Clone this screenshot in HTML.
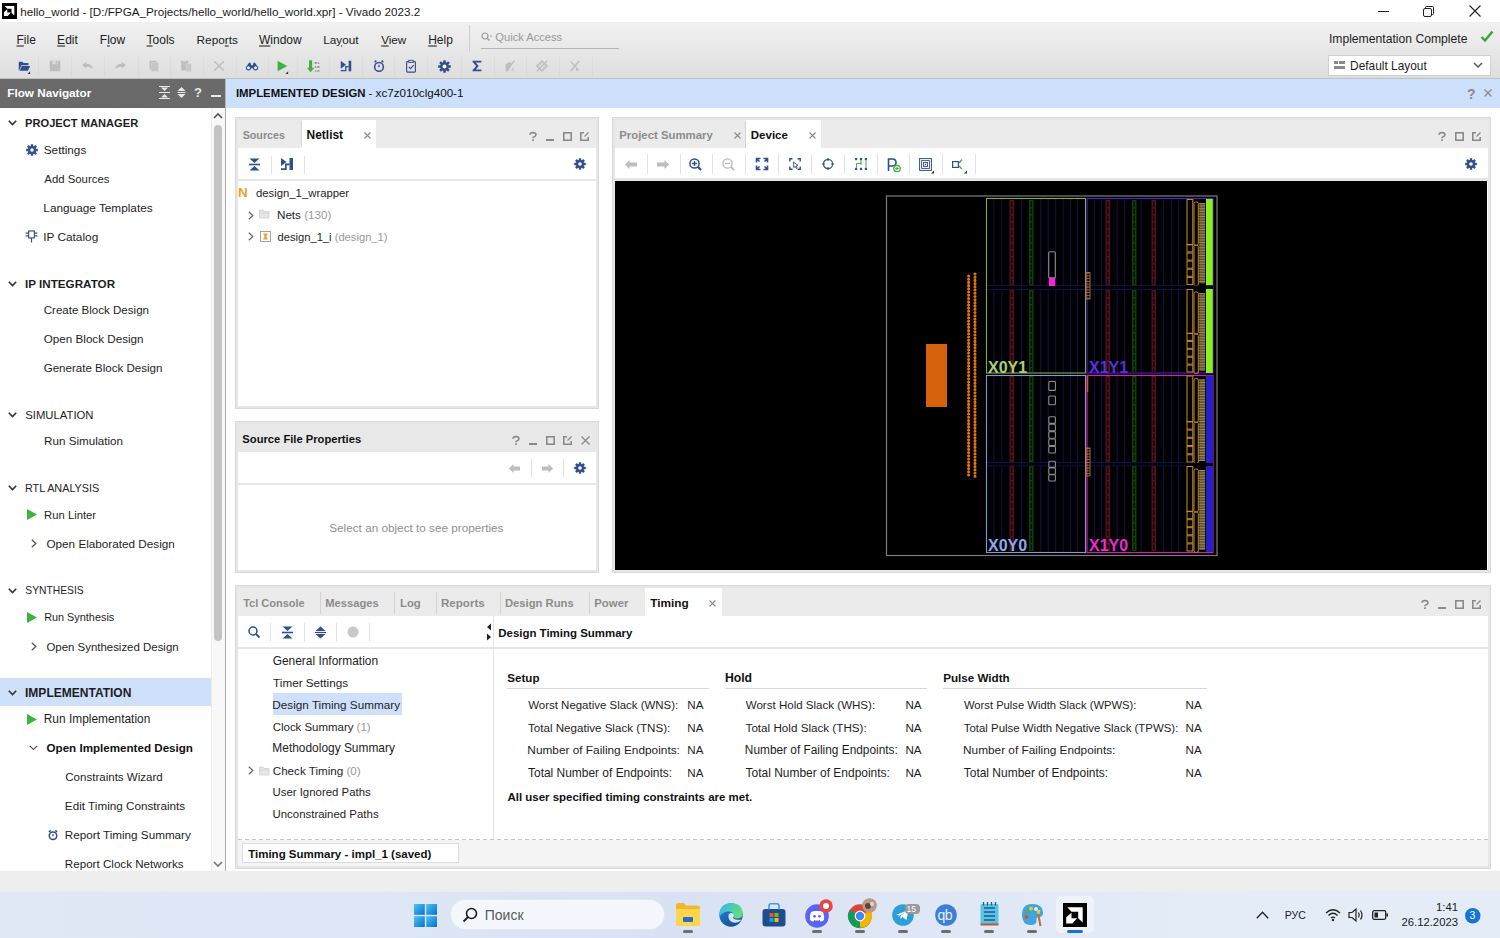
<!DOCTYPE html><html><head><meta charset="utf-8"><style>
html,body{margin:0;padding:0;}
body{width:1500px;height:938px;overflow:hidden;position:relative;background:#fff;font-family:"Liberation Sans",sans-serif;}
.t{position:absolute;white-space:nowrap;}
svg{overflow:visible}
</style></head><body>

<div style="position:absolute;left:0px;top:0px;width:1500px;height:22px;background:#fff"></div>
<svg style="position:absolute;left:2px;top:3px;" width="15" height="16" viewBox="0 0 15 16"><rect width="15" height="16" fill="#000"/><path d="M2.7 3 H12.3 V12.5 L9.5 9.8 V5.8 H5.3 Z" fill="#fff"/><path d="M2 13 V9 L5.3 6.2 V9.6 H8.8 L5.8 13 Z" fill="#fff"/></svg>
<div class="t" style="left:20.18px;top:3.5px;font-size:11.68px;font-weight:400;color:#1a1a1a;line-height:16px;">hello_world - [D:/FPGA_Projects/hello_world/hello_world.xpr] - Vivado 2023.2</div>
<div style="position:absolute;left:1378px;top:11px;width:11px;height:1px;background:#222"></div>
<svg style="position:absolute;left:1423px;top:6px;" width="11" height="11" viewBox="0 0 11 11"><rect x="0.5" y="2.5" width="8" height="8" rx="1.5" fill="none" stroke="#222"/><path d="M2.5 2.5 V1.5 Q2.5 0.5 3.5 0.5 H9.5 Q10.5 0.5 10.5 1.5 V7.5 Q10.5 8.5 9.5 8.5 H8.5" fill="none" stroke="#222"/></svg>
<svg style="position:absolute;left:1469px;top:5px;" width="12" height="12" viewBox="0 0 12 12"><path d="M0.5 0.5 L11.5 11.5 M11.5 0.5 L0.5 11.5" stroke="#222" stroke-width="1.1"/></svg>
<div style="position:absolute;left:0px;top:22px;width:1500px;height:56px;background:linear-gradient(#f1f1f1,#dedede)"></div>
<div class="t" style="left:16.51px;top:32.0px;font-size:12px;font-weight:400;color:#222;line-height:16px;"><u style="text-decoration-thickness:1.5px;text-underline-offset:1px;text-decoration-color:#808080">F</u>ile</div>
<div class="t" style="left:57.12px;top:32.0px;font-size:12px;font-weight:400;color:#222;line-height:16px;"><u style="text-decoration-thickness:1.5px;text-underline-offset:1px;text-decoration-color:#808080">E</u>dit</div>
<div class="t" style="left:99.84px;top:32.0px;font-size:11.94px;font-weight:400;color:#222;line-height:16px;">F<u style="text-decoration-thickness:1.5px;text-underline-offset:1px;text-decoration-color:#808080">l</u>ow</div>
<div class="t" style="left:146.55px;top:32.0px;font-size:12px;font-weight:400;color:#222;line-height:16px;"><u style="text-decoration-thickness:1.5px;text-underline-offset:1px;text-decoration-color:#808080">T</u>ools</div>
<div class="t" style="left:196.55px;top:32.0px;font-size:11.82px;font-weight:400;color:#222;line-height:16px;">Repo<u style="text-decoration-thickness:1.5px;text-underline-offset:1px;text-decoration-color:#808080">r</u>ts</div>
<div class="t" style="left:259.04px;top:32.0px;font-size:12px;font-weight:400;color:#222;line-height:16px;"><u style="text-decoration-thickness:1.5px;text-underline-offset:1px;text-decoration-color:#808080">W</u>indow</div>
<div class="t" style="left:323.16px;top:32.0px;font-size:11.77px;font-weight:400;color:#222;line-height:16px;">La<u style="text-decoration-thickness:1.5px;text-underline-offset:1px;text-decoration-color:#808080">y</u>out</div>
<div class="t" style="left:381.14px;top:32.0px;font-size:11.66px;font-weight:400;color:#222;line-height:16px;"><u style="text-decoration-thickness:1.5px;text-underline-offset:1px;text-decoration-color:#808080">V</u>iew</div>
<div class="t" style="left:428.18px;top:32.0px;font-size:12px;font-weight:400;color:#222;line-height:16px;"><u style="text-decoration-thickness:1.5px;text-underline-offset:1px;text-decoration-color:#808080">H</u>elp</div>
<div style="position:absolute;left:469px;top:25px;width:1px;height:27px;background:#cfcfcf"></div>
<svg style="position:absolute;left:481px;top:32px;" width="12" height="10" viewBox="0 0 12 10"><circle cx="4" cy="4" r="3" fill="none" stroke="#9a9a9a" stroke-width="1.2"/><path d="M6 6 L8.5 8.5" stroke="#9a9a9a" stroke-width="1.4"/><path d="M9 4 h2" stroke="#9a9a9a"/></svg>
<div class="t" style="left:495.3px;top:29.0px;font-size:11.15px;font-weight:400;color:#9a9a9a;line-height:16px;">Quick Access</div>
<div style="position:absolute;left:481px;top:48px;width:138px;height:1px;background:#b5b5b5"></div>
<div class="t" style="left:1328.9px;top:31.0px;font-size:12.17px;font-weight:400;color:#1e1e1e;line-height:16px;">Implementation Complete</div>
<svg style="position:absolute;left:1480px;top:30px;" width="14" height="13" viewBox="0 0 14 13"><path d="M1.5 7 L5 10.5 L12.5 1.5" fill="none" stroke="#3aa33a" stroke-width="2.4"/></svg>
<div style="position:absolute;left:1328px;top:55px;width:163px;height:21px;background:#fff;border:1px solid #d0d0d0;box-sizing:border-box"></div>
<svg style="position:absolute;left:1334px;top:61px;" width="11" height="9" viewBox="0 0 11 9"><rect x="0" y="0" width="4" height="3" fill="#8a8a8a"/><rect x="5" y="0" width="6" height="3" fill="#8a8a8a"/><rect x="0" y="5" width="11" height="3" fill="#8a8a8a"/></svg>
<div class="t" style="left:1350.05px;top:57.5px;font-size:11.9px;font-weight:400;color:#1e1e1e;line-height:16px;">Default Layout</div>
<svg style="position:absolute;left:1473px;top:62px;" width="10" height="7" viewBox="0 0 10 7"><path d="M1 1 L5 5 L9 1" fill="none" stroke="#555" stroke-width="1.5"/></svg>
<svg style="position:absolute;left:17.0px;top:59.0px;" width="14" height="14" viewBox="0 0 16 16"><path d="M2 3 h4 l1.5 1.5 H13 V7 H5 L2.5 13 H2 Z" fill="#2f4f8f"/><path d="M5.5 8 H15 L12.5 13.5 H3 Z" fill="#2f4f8f"/><path d="M15 14 V17 H12 Z" fill="#333"/></svg>
<svg style="position:absolute;left:48.0px;top:59.0px;" width="14" height="14" viewBox="0 0 16 16"><path d="M2 2 H14 V14 H2 Z" fill="#bdbdbd"/><rect x="5" y="2" width="6" height="4" fill="#d9d9d9"/><rect x="9" y="2.5" width="1.3" height="2.5" fill="#bdbdbd"/></svg>
<svg style="position:absolute;left:81.0px;top:59.0px;" width="14" height="14" viewBox="0 0 16 16"><path d="M1.5 7 L6 3 V5.5 Q12 5.5 14 11.5 Q11 8.5 6 8.5 V11 Z" fill="#bdbdbd"/></svg>
<svg style="position:absolute;left:113.0px;top:59.0px;" width="14" height="14" viewBox="0 0 16 16"><path d="M14.5 7 L10 3 V5.5 Q4 5.5 2 11.5 Q5 8.5 10 8.5 V11 Z" fill="#bdbdbd"/></svg>
<svg style="position:absolute;left:146.7px;top:59.0px;" width="14" height="14" viewBox="0 0 16 16"><rect x="3" y="2" width="8" height="10" fill="#bdbdbd"/><rect x="5" y="4" width="8" height="10" fill="#c6c6c6" stroke="#d5d5d5" stroke-width="0.6"/></svg>
<svg style="position:absolute;left:179.0px;top:59.0px;" width="14" height="14" viewBox="0 0 16 16"><rect x="2.5" y="2" width="8" height="11" fill="#bdbdbd"/><rect x="4.5" y="1.5" width="4" height="1.6" fill="#dedede"/><rect x="8" y="5.5" width="6" height="9" fill="#c9c9c9" stroke="#dcdcdc" stroke-width="0.6"/></svg>
<svg style="position:absolute;left:212.0px;top:59.0px;" width="14" height="14" viewBox="0 0 16 16"><path d="M2.5 2.5 L13.5 13.5 M13.5 2.5 L2.5 13.5" stroke="#bdbdbd" stroke-width="1.6"/></svg>
<svg style="position:absolute;left:245.0px;top:59.0px;" width="14" height="14" viewBox="0 0 16 16"><path d="M4 5 Q5 3.5 6.5 4.5 L7 7 H9 L9.5 4.5 Q11 3.5 12 5 L15 9.5 Q15.5 13 12 13 Q9.5 13 9 10.5 H7 Q6.5 13 4 13 Q0.5 13 1 9.5 Z" fill="#2f4f8f"/><circle cx="4" cy="10" r="1.8" fill="#e6e6e6"/><circle cx="12" cy="10" r="1.8" fill="#e6e6e6"/></svg>
<svg style="position:absolute;left:275.0px;top:59.0px;" width="14" height="14" viewBox="0 0 16 16"><path d="M3 2 L14 8 L3 14 Z" fill="#3cb43c"/><path d="M15 14 V17 H12 Z" fill="#333"/></svg>
<svg style="position:absolute;left:306.0px;top:59.0px;" width="14" height="14" viewBox="0 0 16 16"><path d="M3 1.5 H6.5 V10 H9 L4.75 15 L0.5 10 H3 Z" fill="#3cb43c" transform="translate(0.5,0)"/><text x="9.5" y="6" font-size="5" font-family="Liberation Mono" fill="#555">01</text><text x="9.5" y="10.5" font-size="5" font-family="Liberation Mono" fill="#555">10</text><text x="9.5" y="14.5" font-size="5" font-family="Liberation Mono" fill="#777">10</text></svg>
<svg style="position:absolute;left:338.6px;top:59.0px;" width="14" height="14" viewBox="0 0 16 16"><path d="M2 2 L8 6.5 L2 11 Z" fill="#2f4f8f"/><rect x="11" y="2" width="3" height="12" fill="#2f4f8f"/><path d="M7 8 H11 V9.5 H8.5 V14 H2 V12.5 H7 Z" fill="#2f4f8f"/></svg>
<svg style="position:absolute;left:371.5px;top:59.0px;" width="14" height="14" viewBox="0 0 16 16"><circle cx="8" cy="9" r="5" fill="none" stroke="#2f4f8f" stroke-width="1.8"/><path d="M3 3.5 L5 2 M13 3.5 L11 2" stroke="#2f4f8f" stroke-width="1.8"/><path d="M8 6.5 V9.5" stroke="#2f4f8f" stroke-width="1.5"/></svg>
<svg style="position:absolute;left:404.3px;top:59.0px;" width="14" height="14" viewBox="0 0 16 16"><rect x="3" y="3" width="10" height="12" rx="1" fill="none" stroke="#2f4f8f" stroke-width="1.3"/><rect x="5.5" y="1.5" width="5" height="2.5" fill="#e0e0e0" stroke="#2f4f8f" stroke-width="1"/><path d="M5.5 9 L7.5 11 L11 7" fill="none" stroke="#2f4f8f" stroke-width="1.2"/></svg>
<svg style="position:absolute;left:437.5px;top:59.5px;" width="13" height="13" viewBox="0 0 16 16"><polygon points="12.97,6.46 15.74,6.43 15.74,9.57 12.97,9.54 12.60,10.43 14.58,12.36 12.36,14.58 10.43,12.60 9.54,12.97 9.57,15.74 6.43,15.74 6.46,12.97 5.57,12.60 3.64,14.58 1.42,12.36 3.40,10.43 3.03,9.54 0.26,9.57 0.26,6.43 3.03,6.46 3.40,5.57 1.42,3.64 3.64,1.42 5.57,3.40 6.46,3.03 6.43,0.26 9.57,0.26 9.54,3.03 10.43,3.40 12.36,1.42 14.58,3.64 12.60,5.57" fill="#2f4f8f"/><circle cx="8" cy="8" r="5.2" fill="#2f4f8f"/><circle cx="8" cy="8" r="2.4" fill="#fff"/></svg>
<svg style="position:absolute;left:470.0px;top:59.0px;" width="14" height="14" viewBox="0 0 16 16"><path d="M3 2 H13 V4 H6.5 L10 8 L6.5 12 H13 V14 H3 V12.5 L7 8 L3 3.5 Z" fill="#2f4f8f"/></svg>
<svg style="position:absolute;left:502.7px;top:59.0px;" width="14" height="14" viewBox="0 0 16 16"><path d="M3 6 L8 3 L10 6 L6 14 H3 Z" fill="#bdbdbd"/><path d="M13 2 L4 13" stroke="#bdbdbd" stroke-width="1.4"/><path d="M9 14 L11 9 L13 14 Z" fill="#ccc"/></svg>
<svg style="position:absolute;left:535.3px;top:59.0px;" width="14" height="14" viewBox="0 0 16 16"><path d="M2 8 L8 2 L14 8 L8 14 Z" fill="none" stroke="#bdbdbd" stroke-width="1.4"/><path d="M4 8 L8 4 L12 8 L8 12 Z" fill="none" stroke="#bdbdbd" stroke-width="1"/><path d="M14 2 L2 14" stroke="#bdbdbd" stroke-width="1.4"/></svg>
<svg style="position:absolute;left:568.3px;top:59.0px;" width="14" height="14" viewBox="0 0 16 16"><path d="M3 3 L9 9 M13 2 L3 14" stroke="#bdbdbd" stroke-width="1.6"/><path d="M9 9 L13 12 L9 14 Z" fill="#bdbdbd"/></svg>
<div style="position:absolute;left:38px;top:56px;width:1px;height:21px;background:rgba(0,0,0,0.025)"></div>
<div style="position:absolute;left:71px;top:56px;width:1px;height:21px;background:rgba(0,0,0,0.025)"></div>
<div style="position:absolute;left:104px;top:56px;width:1px;height:21px;background:rgba(0,0,0,0.025)"></div>
<div style="position:absolute;left:138px;top:56px;width:1px;height:21px;background:rgba(0,0,0,0.025)"></div>
<div style="position:absolute;left:170px;top:56px;width:1px;height:21px;background:rgba(0,0,0,0.025)"></div>
<div style="position:absolute;left:203px;top:56px;width:1px;height:21px;background:rgba(0,0,0,0.025)"></div>
<div style="position:absolute;left:236px;top:56px;width:1px;height:21px;background:rgba(0,0,0,0.025)"></div>
<div style="position:absolute;left:268px;top:56px;width:1px;height:21px;background:rgba(0,0,0,0.025)"></div>
<div style="position:absolute;left:297px;top:56px;width:1px;height:21px;background:rgba(0,0,0,0.025)"></div>
<div style="position:absolute;left:329px;top:56px;width:1px;height:21px;background:rgba(0,0,0,0.025)"></div>
<div style="position:absolute;left:362px;top:56px;width:1px;height:21px;background:rgba(0,0,0,0.025)"></div>
<div style="position:absolute;left:394px;top:56px;width:1px;height:21px;background:rgba(0,0,0,0.025)"></div>
<div style="position:absolute;left:427px;top:56px;width:1px;height:21px;background:rgba(0,0,0,0.025)"></div>
<div style="position:absolute;left:461px;top:56px;width:1px;height:21px;background:rgba(0,0,0,0.025)"></div>
<div style="position:absolute;left:494px;top:56px;width:1px;height:21px;background:rgba(0,0,0,0.025)"></div>
<div style="position:absolute;left:526px;top:56px;width:1px;height:21px;background:rgba(0,0,0,0.025)"></div>
<div style="position:absolute;left:559px;top:56px;width:1px;height:21px;background:rgba(0,0,0,0.025)"></div>
<div style="position:absolute;left:592px;top:56px;width:1px;height:21px;background:rgba(0,0,0,0.025)"></div>
<div style="position:absolute;left:0px;top:78px;width:1500px;height:1px;background:#c2c2c2"></div>
<div style="position:absolute;left:0px;top:79px;width:225px;height:29px;background:#6a6a6a"></div>
<div style="position:absolute;left:225px;top:79px;width:1px;height:29px;background:#b5b5b5"></div>
<div class="t" style="left:7.24px;top:84.5px;font-size:11.73px;font-weight:700;color:#fff;line-height:16px;">Flow Navigator</div>
<svg style="position:absolute;left:159px;top:86px;" width="11" height="13" viewBox="0 0 11 13"><path d="M0 0.5 H11 M0 6.5 H11 M0 12.5 H11" stroke="#e8e8e8" stroke-width="1.2"/><path d="M2 1.5 L9 1.5 L5.5 5 Z M2 11.5 L9 11.5 L5.5 8 Z" fill="#e8e8e8"/></svg>
<svg style="position:absolute;left:177px;top:86px;" width="9" height="13" viewBox="0 0 9 13"><path d="M0.5 5 L4.5 1 L8.5 5 Z M0.5 8 L4.5 12 L8.5 8 Z" fill="#e8e8e8"/><path d="M0.5 6.5 H8.5" stroke="#e8e8e8" stroke-width="1"/></svg>
<div class="t" style="left:194px;top:84.5px;font-size:13px;font-weight:700;color:#e8e8e8;line-height:16px;">?</div>
<div style="position:absolute;left:211px;top:95px;width:10px;height:2px;background:#e8e8e8"></div>
<div style="position:absolute;left:0px;top:108px;width:211px;height:763px;background:#fff"></div>
<div style="position:absolute;left:211px;top:108px;width:14px;height:763px;background:#f8f8f8;box-shadow:inset 1px 0 0 #ececec"></div>
<div style="position:absolute;left:214px;top:125px;width:8px;height:516px;background:#c3c3c3;border-radius:4px"></div>
<svg style="position:absolute;left:213px;top:112px;" width="10" height="7" viewBox="0 0 10 7"><path d="M1 6 L5 2 L9 6" fill="none" stroke="#555" stroke-width="1.6"/></svg>
<svg style="position:absolute;left:213px;top:861px;" width="10" height="7" viewBox="0 0 10 7"><path d="M1 1 L5 5 L9 1" fill="none" stroke="#777" stroke-width="1.6"/></svg>
<div style="position:absolute;left:225px;top:108px;width:1px;height:763px;background:#a9a9a9"></div>
<div style="position:absolute;left:0px;top:678px;width:211px;height:28px;background:#cfe0fb"></div>
<svg style="position:absolute;left:8px;top:120px;" width="9" height="6" viewBox="0 0 9 6"><path d="M0.8 0.8 L4.5 4.5 L8.2 0.8" fill="none" stroke="#333" stroke-width="1.6"/></svg>
<div class="t" style="left:25.08px;top:115.0px;font-size:11.13px;font-weight:700;color:#1e1e1e;line-height:16px;">PROJECT MANAGER</div>
<svg style="position:absolute;left:8px;top:280.5px;" width="9" height="6" viewBox="0 0 9 6"><path d="M0.8 0.8 L4.5 4.5 L8.2 0.8" fill="none" stroke="#333" stroke-width="1.6"/></svg>
<div class="t" style="left:25.04px;top:275.5px;font-size:11.67px;font-weight:700;color:#1e1e1e;line-height:16px;">IP INTEGRATOR</div>
<svg style="position:absolute;left:8px;top:411.5px;" width="9" height="6" viewBox="0 0 9 6"><path d="M0.8 0.8 L4.5 4.5 L8.2 0.8" fill="none" stroke="#333" stroke-width="1.6"/></svg>
<div class="t" style="left:25.29px;top:406.5px;font-size:11.3px;font-weight:400;color:#1e1e1e;line-height:16px;">SIMULATION</div>
<svg style="position:absolute;left:8px;top:485px;" width="9" height="6" viewBox="0 0 9 6"><path d="M0.8 0.8 L4.5 4.5 L8.2 0.8" fill="none" stroke="#333" stroke-width="1.6"/></svg>
<div class="t" style="left:24.93px;top:480.0px;font-size:10.82px;font-weight:400;color:#1e1e1e;line-height:16px;">RTL ANALYSIS</div>
<svg style="position:absolute;left:8px;top:587.5px;" width="9" height="6" viewBox="0 0 9 6"><path d="M0.8 0.8 L4.5 4.5 L8.2 0.8" fill="none" stroke="#333" stroke-width="1.6"/></svg>
<div class="t" style="left:25.34px;top:582.5px;font-size:10.3px;font-weight:400;color:#1e1e1e;line-height:16px;">SYNTHESIS</div>
<svg style="position:absolute;left:8px;top:689.5px;" width="9" height="6" viewBox="0 0 9 6"><path d="M0.8 0.8 L4.5 4.5 L8.2 0.8" fill="none" stroke="#333" stroke-width="1.6"/></svg>
<div class="t" style="left:25.02px;top:684.5px;font-size:12.03px;font-weight:700;color:#1e1e1e;line-height:16px;">IMPLEMENTATION</div>
<div class="t" style="left:43.77px;top:142.0px;font-size:11.77px;font-weight:400;color:#1e1e1e;line-height:16px;">Settings</div>
<div class="t" style="left:44.3px;top:171.0px;font-size:11.39px;font-weight:400;color:#1e1e1e;line-height:16px;">Add Sources</div>
<div class="t" style="left:43.35px;top:200.0px;font-size:11.81px;font-weight:400;color:#1e1e1e;line-height:16px;">Language Templates</div>
<div class="t" style="left:43.23px;top:229.0px;font-size:11.84px;font-weight:400;color:#1e1e1e;line-height:16px;">IP Catalog</div>
<div class="t" style="left:43.72px;top:302.0px;font-size:11.56px;font-weight:400;color:#1e1e1e;line-height:16px;">Create Block Design</div>
<div class="t" style="left:43.77px;top:331.0px;font-size:11.67px;font-weight:400;color:#1e1e1e;line-height:16px;">Open Block Design</div>
<div class="t" style="left:43.72px;top:360.0px;font-size:11.54px;font-weight:400;color:#1e1e1e;line-height:16px;">Generate Block Design</div>
<div class="t" style="left:44.07px;top:433.0px;font-size:11.65px;font-weight:400;color:#1e1e1e;line-height:16px;">Run Simulation</div>
<div class="t" style="left:44.1px;top:506.5px;font-size:11.27px;font-weight:400;color:#1e1e1e;line-height:16px;">Run Linter</div>
<div class="t" style="left:46.47px;top:535.5px;font-size:11.73px;font-weight:400;color:#1e1e1e;line-height:16px;">Open Elaborated Design</div>
<div class="t" style="left:44.13px;top:609.0px;font-size:10.89px;font-weight:400;color:#1e1e1e;line-height:16px;">Run Synthesis</div>
<div class="t" style="left:46.39px;top:638.5px;font-size:11.44px;font-weight:400;color:#1e1e1e;line-height:16px;">Open Synthesized Design</div>
<div class="t" style="left:43.75px;top:711.0px;font-size:11.91px;font-weight:400;color:#1e1e1e;line-height:16px;">Run Implementation</div>
<div class="t" style="left:65.22px;top:768.8px;font-size:11.55px;font-weight:400;color:#1e1e1e;line-height:16px;">Constraints Wizard</div>
<div class="t" style="left:64.86px;top:797.5px;font-size:11.71px;font-weight:400;color:#1e1e1e;line-height:16px;">Edit Timing Constraints</div>
<div class="t" style="left:64.86px;top:826.5px;font-size:11.7px;font-weight:400;color:#1e1e1e;line-height:16px;">Report Timing Summary</div>
<div class="t" style="left:64.87px;top:855.5px;font-size:11.61px;font-weight:400;color:#1e1e1e;line-height:16px;">Report Clock Networks</div>
<div class="t" style="left:46.54px;top:740.0px;font-size:11.62px;font-weight:700;color:#111;line-height:16px;">Open Implemented Design</div>
<svg style="position:absolute;left:26px;top:144px;" width="12" height="12" viewBox="0 0 16 16"><polygon points="12.97,6.46 15.74,6.43 15.74,9.57 12.97,9.54 12.60,10.43 14.58,12.36 12.36,14.58 10.43,12.60 9.54,12.97 9.57,15.74 6.43,15.74 6.46,12.97 5.57,12.60 3.64,14.58 1.42,12.36 3.40,10.43 3.03,9.54 0.26,9.57 0.26,6.43 3.03,6.46 3.40,5.57 1.42,3.64 3.64,1.42 5.57,3.40 6.46,3.03 6.43,0.26 9.57,0.26 9.54,3.03 10.43,3.40 12.36,1.42 14.58,3.64 12.60,5.57" fill="#2f4f8f"/><circle cx="8" cy="8" r="5.2" fill="#2f4f8f"/><circle cx="8" cy="8" r="2.4" fill="#fff"/></svg>
<svg style="position:absolute;left:25px;top:230px;" width="13" height="13" viewBox="0 0 16 16"><rect x="4.5" y="1.2" width="7" height="8.5" fill="none" stroke="#2f4f8f" stroke-width="1.4"/><path d="M8 9.7 V15.5 M0.8 3.8 H4.5 M0.8 7.2 H4.5 M11.5 3.8 H15.2 M11.5 7.2 H15.2" stroke="#2f4f8f" stroke-width="1.4"/></svg>
<svg style="position:absolute;left:26.5px;top:509.0px;" width="10" height="11" viewBox="0 0 10 11"><path d="M0 0 L10 5.5 L0 11 Z" fill="#3cb43c"/></svg>
<svg style="position:absolute;left:26.5px;top:611.5px;" width="10" height="11" viewBox="0 0 10 11"><path d="M0 0 L10 5.5 L0 11 Z" fill="#3cb43c"/></svg>
<svg style="position:absolute;left:26.5px;top:713.5px;" width="10" height="11" viewBox="0 0 10 11"><path d="M0 0 L10 5.5 L0 11 Z" fill="#3cb43c"/></svg>
<svg style="position:absolute;left:31px;top:539.0px;" width="6" height="9" viewBox="0 0 6 9"><path d="M0.8 0.8 L4.8 4.5 L0.8 8.2" fill="none" stroke="#555" stroke-width="1.3"/></svg>
<svg style="position:absolute;left:31px;top:642.0px;" width="6" height="9" viewBox="0 0 6 9"><path d="M0.8 0.8 L4.8 4.5 L0.8 8.2" fill="none" stroke="#555" stroke-width="1.3"/></svg>
<svg style="position:absolute;left:29px;top:745px;" width="9" height="6" viewBox="0 0 9 6"><path d="M0.8 0.8 L4.5 4.5 L8.2 0.8" fill="none" stroke="#555" stroke-width="1.2"/></svg>
<svg style="position:absolute;left:47px;top:829px;" width="12" height="12" viewBox="0 0 16 16"><circle cx="8" cy="9" r="5" fill="none" stroke="#2f4f8f" stroke-width="2"/><path d="M2.5 4 L5 1.8 M13.5 4 L11 1.8" stroke="#2f4f8f" stroke-width="2"/><path d="M8 6.5 V9.5" stroke="#2f4f8f" stroke-width="1.6"/></svg>
<div style="position:absolute;left:226px;top:79px;width:1274px;height:29px;background:#cce0fc"></div>
<div class="t" style="left:235.96px;top:85.0px;font-size:11.39px;font-weight:700;color:#111;line-height:16px;">IMPLEMENTED DESIGN</div>
<div class="t" style="left:368.48px;top:85.0px;font-size:11.63px;font-weight:400;color:#111;line-height:16px;">- xc7z010clg400-1</div>
<div class="t" style="left:1467px;top:86.0px;font-size:14px;font-weight:700;color:#8a8a8a;line-height:16px;">?</div>
<svg style="position:absolute;left:1484px;top:89px;" width="8" height="8" viewBox="0 0 8 8"><path d="M0.5 0.5 L7.5 7.5 M7.5 0.5 L0.5 7.5" stroke="#8a8a8a" stroke-width="1.3"/></svg>
<div style="position:absolute;left:226px;top:108px;width:1274px;height:763px;background:#fff"></div>
<div style="position:absolute;left:235px;top:117px;width:364px;height:292px;border:1px solid #d9d9d9;box-sizing:border-box;box-shadow:inset 0 0 0 2px #e6e6e6;background:#fff"></div>
<div style="position:absolute;left:238px;top:120px;width:358px;height:28px;background:#ebebeb"></div>
<div style="position:absolute;left:302px;top:120px;width:74px;height:28px;background:#fff"></div>
<div style="position:absolute;left:301px;top:121px;width:1px;height:25px;background:#d3d3d3"></div>
<div class="t" style="left:242.68px;top:126.8px;font-size:10.71px;font-weight:700;color:#8c8c8c;line-height:16px;">Sources</div>
<div class="t" style="left:306.62px;top:126.8px;font-size:11.95px;font-weight:700;color:#111;line-height:16px;">Netlist</div>
<svg style="position:absolute;left:364.3px;top:131.5px;" width="7" height="7" viewBox="0 0 7 7"><path d="M0.5 0.5 L6.5 6.5 M6.5 0.5 L0.5 6.5" stroke="#8a8a8a" stroke-width="1.1"/></svg>
<svg style="position:absolute;left:529px;top:131.5px;" width="8" height="9" viewBox="0 0 8 9"><path d="M1 2.8 Q1 0.6 4 0.6 Q7 0.6 7 2.8 Q7 4.3 4.8 5 Q4 5.3 4 6.2" fill="none" stroke="#8a8a8a" stroke-width="1.6"/><rect x="3.1" y="7.3" width="1.8" height="1.7" fill="#8a8a8a"/></svg>
<div style="position:absolute;left:546px;top:138.5px;width:8px;height:2.0px;background:#8a8a8a"></div>
<svg style="position:absolute;left:563px;top:131.5px;" width="9" height="9" viewBox="0 0 9 9"><rect x="0.8" y="0.8" width="7.4" height="7.4" fill="none" stroke="#8a8a8a" stroke-width="1.6"/></svg>
<svg style="position:absolute;left:580px;top:131.5px;" width="9" height="9" viewBox="0 0 9 9"><path d="M4 0.8 H0.8 V8.2 H8.2 V5" fill="none" stroke="#8a8a8a" stroke-width="1.6"/><path d="M4.5 4.5 L8.5 0.5" stroke="#8a8a8a" stroke-width="1.2"/></svg>
<div style="position:absolute;left:238px;top:179px;width:358px;height:2px;background:#e6e6e6"></div>
<div style="position:absolute;left:270.6px;top:156px;width:1.0px;height:18px;background:#e2e2e2"></div>
<div style="position:absolute;left:303.7px;top:156px;width:1.0px;height:18px;background:#e2e2e2"></div>
<svg style="position:absolute;left:249px;top:157.5px;" width="11" height="13" viewBox="0 0 11 13"><path d="M0 6.5 H11" stroke="#2f4f8f" stroke-width="1.6"/><path d="M0.5 0.5 H10.5 L5.5 5 Z M0.5 12.5 H10.5 L5.5 8 Z" fill="#2f4f8f"/></svg>
<svg style="position:absolute;left:281px;top:158px;" width="12" height="12" viewBox="0 0 12 12"><path d="M0 0 L5.5 4 L0 8 Z" fill="#2f4f8f"/><rect x="8.5" y="0" width="3.5" height="12" fill="#2f4f8f"/><path d="M4 5.5 H8.5 V7.2 H5.7 V12 H0 V10.3 H4 Z" fill="#2f4f8f"/></svg>
<svg style="position:absolute;left:574px;top:158px;" width="12" height="12" viewBox="0 0 16 16"><polygon points="12.97,6.46 15.74,6.43 15.74,9.57 12.97,9.54 12.60,10.43 14.58,12.36 12.36,14.58 10.43,12.60 9.54,12.97 9.57,15.74 6.43,15.74 6.46,12.97 5.57,12.60 3.64,14.58 1.42,12.36 3.40,10.43 3.03,9.54 0.26,9.57 0.26,6.43 3.03,6.46 3.40,5.57 1.42,3.64 3.64,1.42 5.57,3.40 6.46,3.03 6.43,0.26 9.57,0.26 9.54,3.03 10.43,3.40 12.36,1.42 14.58,3.64 12.60,5.57" fill="#2f4f8f"/><circle cx="8" cy="8" r="5.2" fill="#2f4f8f"/><circle cx="8" cy="8" r="2.4" fill="#fff"/></svg>
<div class="t" style="left:238px;top:184.6px;font-size:13.5px;font-weight:700;color:#f0a030;line-height:16px;">N</div>
<div class="t" style="left:255.95px;top:184.6px;font-size:11.33px;font-weight:400;color:#1e1e1e;line-height:16px;">design_1_wrapper</div>
<svg style="position:absolute;left:247.5px;top:210.5px;" width="6" height="9" viewBox="0 0 6 9"><path d="M0.8 0.8 L4.8 4.5 L0.8 8.2" fill="none" stroke="#666" stroke-width="1.2"/></svg>
<svg style="position:absolute;left:259px;top:209px;" width="11" height="10" viewBox="0 0 11 10"><path d="M0.5 1 H4 L5 2.5 H10 V9 H0.5 Z" fill="#e6e6e6" stroke="#cfcfcf" stroke-width="0.8"/><path d="M0.5 4 H10" stroke="#cfcfcf" stroke-width="0.8"/></svg>
<div class="t" style="left:276.97px;top:207.0px;font-size:11.67px;font-weight:400;color:#1e1e1e;line-height:16px;">Nets <span style="color:#9a9a9a">(130)</span></div>
<svg style="position:absolute;left:247.5px;top:232.1px;" width="6" height="9" viewBox="0 0 6 9"><path d="M0.8 0.8 L4.8 4.5 L0.8 8.2" fill="none" stroke="#666" stroke-width="1.2"/></svg>
<svg style="position:absolute;left:259.5px;top:231px;" width="11" height="11" viewBox="0 0 11 11"><rect x="0.5" y="0.5" width="10" height="10" fill="#fff" stroke="#999" stroke-width="0.9"/><path d="M3 2.5 H8 L6.3 5.5 L8 8.5 H3 L4.7 5.5 Z" fill="#f0a030"/></svg>
<div class="t" style="left:277.45px;top:228.6px;font-size:11.2px;font-weight:400;color:#1e1e1e;line-height:16px;">design_1_i <span style="color:#9a9a9a">(design_1)</span></div>
<div style="position:absolute;left:235px;top:421px;width:364px;height:152px;border:1px solid #d9d9d9;box-sizing:border-box;box-shadow:inset 0 0 0 2px #e6e6e6;background:#fff"></div>
<div style="position:absolute;left:238px;top:424px;width:358px;height:28px;background:#e8e8e8"></div>
<div class="t" style="left:242.36px;top:431.0px;font-size:11.19px;font-weight:700;color:#111;line-height:16px;">Source File Properties</div>
<svg style="position:absolute;left:512px;top:436px;" width="8" height="9" viewBox="0 0 8 9"><path d="M1 2.8 Q1 0.6 4 0.6 Q7 0.6 7 2.8 Q7 4.3 4.8 5 Q4 5.3 4 6.2" fill="none" stroke="#8a8a8a" stroke-width="1.6"/><rect x="3.1" y="7.3" width="1.8" height="1.7" fill="#8a8a8a"/></svg>
<div style="position:absolute;left:529px;top:443px;width:8px;height:2px;background:#8a8a8a"></div>
<svg style="position:absolute;left:546px;top:436px;" width="9" height="9" viewBox="0 0 9 9"><rect x="0.8" y="0.8" width="7.4" height="7.4" fill="none" stroke="#8a8a8a" stroke-width="1.6"/></svg>
<svg style="position:absolute;left:563px;top:436px;" width="9" height="9" viewBox="0 0 9 9"><path d="M4 0.8 H0.8 V8.2 H8.2 V5" fill="none" stroke="#8a8a8a" stroke-width="1.6"/><path d="M4.5 4.5 L8.5 0.5" stroke="#8a8a8a" stroke-width="1.2"/></svg>
<svg style="position:absolute;left:580.5px;top:436px;" width="9" height="9" viewBox="0 0 9 9"><path d="M0.5 0.5 L8.5 8.5 M8.5 0.5 L0.5 8.5" stroke="#8a8a8a" stroke-width="1.3"/></svg>
<div style="position:absolute;left:238px;top:483px;width:358px;height:2px;background:#e6e6e6"></div>
<div style="position:absolute;left:530.6px;top:458px;width:1.0px;height:20px;background:#e2e2e2"></div>
<div style="position:absolute;left:563.3px;top:458px;width:1.0px;height:20px;background:#e2e2e2"></div>
<svg style="position:absolute;left:509px;top:463.5px;" width="11" height="9" viewBox="0 0 11 9"><path d="M0 4.5 L4.5 0 V2.5 H11 V6.5 H4.5 V9 Z" fill="#bdbdbd"/></svg>
<svg style="position:absolute;left:541.5px;top:463.5px;" width="11" height="9" viewBox="0 0 11 9"><path d="M11 4.5 L6.5 0 V2.5 H0 V6.5 H6.5 V9 Z" fill="#bdbdbd"/></svg>
<svg style="position:absolute;left:574px;top:462px;" width="12" height="12" viewBox="0 0 16 16"><polygon points="12.97,6.46 15.74,6.43 15.74,9.57 12.97,9.54 12.60,10.43 14.58,12.36 12.36,14.58 10.43,12.60 9.54,12.97 9.57,15.74 6.43,15.74 6.46,12.97 5.57,12.60 3.64,14.58 1.42,12.36 3.40,10.43 3.03,9.54 0.26,9.57 0.26,6.43 3.03,6.46 3.40,5.57 1.42,3.64 3.64,1.42 5.57,3.40 6.46,3.03 6.43,0.26 9.57,0.26 9.54,3.03 10.43,3.40 12.36,1.42 14.58,3.64 12.60,5.57" fill="#2f4f8f"/><circle cx="8" cy="8" r="5.2" fill="#2f4f8f"/><circle cx="8" cy="8" r="2.4" fill="#fff"/></svg>
<div class="t" style="left:329.27px;top:520.3px;font-size:11.74px;font-weight:400;color:#8f8f8f;line-height:16px;">Select an object to see properties</div>
<div style="position:absolute;left:612px;top:117px;width:879px;height:456px;border:1px solid #d9d9d9;box-sizing:border-box;box-shadow:inset 0 0 0 2px #e6e6e6;background:#fff"></div>
<div style="position:absolute;left:615px;top:120px;width:873px;height:28px;background:#ebebeb"></div>
<div style="position:absolute;left:746px;top:120px;width:75px;height:28px;background:#fff"></div>
<div style="position:absolute;left:745px;top:121px;width:1px;height:27px;background:#d6d6d6"></div>
<div class="t" style="left:619.26px;top:126.8px;font-size:11.38px;font-weight:700;color:#8c8c8c;line-height:16px;">Project Summary</div>
<svg style="position:absolute;left:734.4px;top:131.5px;" width="7" height="7" viewBox="0 0 7 7"><path d="M0.5 0.5 L6.5 6.5 M6.5 0.5 L0.5 6.5" stroke="#8a8a8a" stroke-width="1.1"/></svg>
<div class="t" style="left:750.75px;top:126.8px;font-size:11.52px;font-weight:700;color:#111;line-height:16px;">Device</div>
<svg style="position:absolute;left:808.5px;top:131.5px;" width="7" height="7" viewBox="0 0 7 7"><path d="M0.5 0.5 L6.5 6.5 M6.5 0.5 L0.5 6.5" stroke="#8a8a8a" stroke-width="1.1"/></svg>
<svg style="position:absolute;left:1438px;top:131.5px;" width="8" height="9" viewBox="0 0 8 9"><path d="M1 2.8 Q1 0.6 4 0.6 Q7 0.6 7 2.8 Q7 4.3 4.8 5 Q4 5.3 4 6.2" fill="none" stroke="#8a8a8a" stroke-width="1.6"/><rect x="3.1" y="7.3" width="1.8" height="1.7" fill="#8a8a8a"/></svg>
<svg style="position:absolute;left:1455px;top:131.5px;" width="9" height="9" viewBox="0 0 9 9"><rect x="0.8" y="0.8" width="7.4" height="7.4" fill="none" stroke="#8a8a8a" stroke-width="1.6"/></svg>
<svg style="position:absolute;left:1472px;top:131.5px;" width="9" height="9" viewBox="0 0 9 9"><path d="M4 0.8 H0.8 V8.2 H8.2 V5" fill="none" stroke="#8a8a8a" stroke-width="1.6"/><path d="M4.5 4.5 L8.5 0.5" stroke="#8a8a8a" stroke-width="1.2"/></svg>
<div style="position:absolute;left:615px;top:178px;width:873px;height:3px;background:#e6e6e6"></div>
<div style="position:absolute;left:647px;top:154px;width:1px;height:20px;background:#e2e2e2"></div>
<div style="position:absolute;left:680px;top:154px;width:1px;height:20px;background:#e2e2e2"></div>
<div style="position:absolute;left:712px;top:154px;width:1px;height:20px;background:#e2e2e2"></div>
<div style="position:absolute;left:745px;top:154px;width:1px;height:20px;background:#e2e2e2"></div>
<div style="position:absolute;left:778px;top:154px;width:1px;height:20px;background:#e2e2e2"></div>
<div style="position:absolute;left:811px;top:154px;width:1px;height:20px;background:#e2e2e2"></div>
<div style="position:absolute;left:844px;top:154px;width:1px;height:20px;background:#e2e2e2"></div>
<div style="position:absolute;left:877px;top:154px;width:1px;height:20px;background:#e2e2e2"></div>
<div style="position:absolute;left:909px;top:154px;width:1px;height:20px;background:#e2e2e2"></div>
<div style="position:absolute;left:942px;top:154px;width:1px;height:20px;background:#e2e2e2"></div>
<div style="position:absolute;left:975px;top:154px;width:1px;height:20px;background:#e2e2e2"></div>
<svg style="position:absolute;left:625px;top:159.5px;" width="12" height="9" viewBox="0 0 12 9"><path d="M0 4.5 L4.5 0 V2.5 H12 V6.5 H4.5 V9 Z" fill="#bdbdbd"/></svg>
<svg style="position:absolute;left:657px;top:159.5px;" width="12" height="9" viewBox="0 0 12 9"><path d="M12 4.5 L7.5 0 V2.5 H0 V6.5 H7.5 V9 Z" fill="#bdbdbd"/></svg>
<svg style="position:absolute;left:689px;top:158px;" width="13" height="13" viewBox="0 0 13 13"><circle cx="5.5" cy="5.5" r="4.6" fill="none" stroke="#2f4f8f" stroke-width="1.5"/><path d="M5.5 3 V8 M3 5.5 H8" stroke="#2f4f8f" stroke-width="1.3"/><path d="M8.8 8.8 L12 12" stroke="#2f4f8f" stroke-width="2.2"/></svg>
<svg style="position:absolute;left:722px;top:158px;" width="13" height="13" viewBox="0 0 13 13"><circle cx="5.5" cy="5.5" r="4.6" fill="none" stroke="#bdbdbd" stroke-width="1.4"/><path d="M3 5.5 H8" stroke="#bdbdbd" stroke-width="1.3"/><path d="M8.8 8.8 L12 12" stroke="#bdbdbd" stroke-width="2"/></svg>
<svg style="position:absolute;left:756px;top:158px;" width="12" height="12" viewBox="0 0 12 12"><path d="M0.5 4.5 V0.5 H4.5 M0.5 0.5 L3.5 3.5 M7.5 0.5 H11.5 V4.5 M11.5 0.5 L8.5 3.5 M0.5 7.5 V11.5 H4.5 M0.5 11.5 L3.5 8.5 M11.5 7.5 V11.5 H7.5 M11.5 11.5 L8.5 8.5" fill="none" stroke="#2f4f8f" stroke-width="1.6"/></svg>
<svg style="position:absolute;left:789px;top:158px;" width="12" height="12" viewBox="0 0 12 12"><path d="M0.8 3.5 V0.8 H3.5 M8.5 0.8 H11.2 V3.5 M0.8 8.5 V11.2 H3.5 M11.2 8.5 V11.2 H8.5" fill="none" stroke="#2f4f8f" stroke-width="1.4"/><path d="M4.5 4 L9 7.5 L7 8 L8.2 10 L7.3 10.5 L6.2 8.5 L4.8 9.6 Z" fill="none" stroke="#2f4f8f" stroke-width="0.9"/></svg>
<svg style="position:absolute;left:821.5px;top:158px;" width="12" height="12" viewBox="0 0 12 12"><circle cx="6" cy="6" r="4.6" fill="none" stroke="#2f4f8f" stroke-width="1.2"/><path d="M6 0 V3 M6 9 V12 M0 6 H3 M9 6 H12" stroke="#2f4f8f" stroke-width="1.2"/></svg>
<svg style="position:absolute;left:854.5px;top:158px;" width="12" height="12" viewBox="0 0 12 12"><rect x="0" y="0" width="2.2" height="2.2" fill="#2f4f8f"/><rect x="4.9" y="0" width="2.2" height="2.2" fill="#2f4f8f"/><rect x="9.8" y="0" width="2.2" height="2.2" fill="#2f4f8f"/><rect x="0" y="9.8" width="2.2" height="2.2" fill="#2f4f8f"/><rect x="4.9" y="9.8" width="2.2" height="2.2" fill="#2f4f8f"/><rect x="9.8" y="9.8" width="2.2" height="2.2" fill="#2f4f8f"/><path d="M6 2.2 V5.5 H1.5 V7 M1.5 7 V9.8 M11 2.2 V9.8 M6 7 V5" fill="none" stroke="#3cb43c" stroke-width="1"/></svg>
<svg style="position:absolute;left:886.5px;top:157.5px;" width="14" height="14" viewBox="0 0 14 14"><path d="M1.5 13 V1 H5.5 Q9 1 9 4.5 Q9 8 5.5 8 H1.5" fill="none" stroke="#2f4f8f" stroke-width="1.6"/><circle cx="10" cy="10.5" r="3.2" fill="#fff" stroke="#3cb43c" stroke-width="1.3"/><path d="M10 8.7 V12.3 M8.2 10.5 H11.8" stroke="#3cb43c" stroke-width="1.2"/></svg>
<svg style="position:absolute;left:919px;top:158px;" width="16" height="16" viewBox="0 0 16 16"><rect x="0.6" y="0.6" width="11.8" height="11.8" fill="none" stroke="#2f4f8f" stroke-width="1"/><rect x="2.6" y="2.6" width="7.8" height="7.8" fill="none" stroke="#2f4f8f" stroke-width="0.9"/><rect x="4.5" y="4.5" width="4" height="4" fill="none" stroke="#2f4f8f" stroke-width="0.9"/><rect x="5.8" y="5.8" width="1.4" height="1.4" fill="#2f4f8f"/><path d="M15 12.5 V15.5 H12 Z" fill="#333"/></svg>
<svg style="position:absolute;left:952px;top:158px;" width="16" height="16" viewBox="0 0 16 16"><rect x="0.6" y="3.6" width="5.8" height="5.8" fill="none" stroke="#2f4f8f" stroke-width="1.2"/><path d="M7 5 L10 1.5 M7 8 L10 11" stroke="#3cb43c" stroke-width="1.4"/><path d="M15 12.5 V15.5 H12 Z" fill="#333"/></svg>
<svg style="position:absolute;left:1465px;top:158px;" width="12" height="12" viewBox="0 0 16 16"><polygon points="12.97,6.46 15.74,6.43 15.74,9.57 12.97,9.54 12.60,10.43 14.58,12.36 12.36,14.58 10.43,12.60 9.54,12.97 9.57,15.74 6.43,15.74 6.46,12.97 5.57,12.60 3.64,14.58 1.42,12.36 3.40,10.43 3.03,9.54 0.26,9.57 0.26,6.43 3.03,6.46 3.40,5.57 1.42,3.64 3.64,1.42 5.57,3.40 6.46,3.03 6.43,0.26 9.57,0.26 9.54,3.03 10.43,3.40 12.36,1.42 14.58,3.64 12.60,5.57" fill="#2f4f8f"/><circle cx="8" cy="8" r="5.2" fill="#2f4f8f"/><circle cx="8" cy="8" r="2.4" fill="#fff"/></svg>
<div style="position:absolute;left:615px;top:181px;width:872px;height:389px;background:#000"></div>
<svg style="position:absolute;left:615px;top:181px" width="873" height="389" viewBox="615 181 873 389"><path d="M994 199 V552" stroke="#10104a" stroke-width="1"/><path d="M1001.8 199 V552" stroke="#10104a" stroke-width="1"/><path d="M1021.6 199 V552" stroke="#10104a" stroke-width="1"/><path d="M1040.7 199 V552" stroke="#10104a" stroke-width="1"/><path d="M1048.2 199 V552" stroke="#10104a" stroke-width="1"/><path d="M1055.7 199 V552" stroke="#10104a" stroke-width="1"/><path d="M1063.1 199 V552" stroke="#10104a" stroke-width="1"/><path d="M1070.6 199 V552" stroke="#10104a" stroke-width="1"/><path d="M1077.5 199 V552" stroke="#10104a" stroke-width="1"/><path d="M1094.4 199 V552" stroke="#10104a" stroke-width="1"/><path d="M1101.6 199 V552" stroke="#10104a" stroke-width="1"/><path d="M1117.2 199 V552" stroke="#10104a" stroke-width="1"/><path d="M1124.4 199 V552" stroke="#10104a" stroke-width="1"/><path d="M1141.2 199 V552" stroke="#10104a" stroke-width="1"/><path d="M1163.5 199 V552" stroke="#10104a" stroke-width="1"/><path d="M1171.7 199 V552" stroke="#10104a" stroke-width="1"/><path d="M1178.5 199 V552" stroke="#10104a" stroke-width="1"/><rect x="987" y="286" width="199" height="3" fill="#000"/><rect x="987" y="463" width="199" height="2.5" fill="#000"/><path d="M987 285.5 H1186" stroke="#0e0e48" stroke-width="1"/><path d="M987 289.5 H1186" stroke="#0e0e48" stroke-width="1"/><path d="M987 462.5 H1186" stroke="#0e0e48" stroke-width="1"/><path d="M987 465.8 H1186" stroke="#0e0e48" stroke-width="1"/><rect x="1009.5" y="200" width="4.5" height="85" fill="#52101e"/><rect x="1011.2" y="201.5" width="1.1" height="5.5" fill="#000"/><rect x="1011.2" y="208.5" width="1.1" height="5.5" fill="#000"/><rect x="1011.2" y="215.5" width="1.1" height="5.5" fill="#000"/><rect x="1011.2" y="222.5" width="1.1" height="5.5" fill="#000"/><rect x="1011.2" y="229.5" width="1.1" height="5.5" fill="#000"/><rect x="1011.2" y="236.5" width="1.1" height="5.5" fill="#000"/><rect x="1011.2" y="243.5" width="1.1" height="5.5" fill="#000"/><rect x="1011.2" y="250.5" width="1.1" height="5.5" fill="#000"/><rect x="1011.2" y="257.5" width="1.1" height="5.5" fill="#000"/><rect x="1011.2" y="264.5" width="1.1" height="5.5" fill="#000"/><rect x="1011.2" y="271.5" width="1.1" height="5.5" fill="#000"/><rect x="1011.2" y="278.5" width="1.1" height="5.5" fill="#000"/><rect x="1105.5" y="200" width="4.5" height="85" fill="#52101e"/><rect x="1107.2" y="201.5" width="1.1" height="5.5" fill="#000"/><rect x="1107.2" y="208.5" width="1.1" height="5.5" fill="#000"/><rect x="1107.2" y="215.5" width="1.1" height="5.5" fill="#000"/><rect x="1107.2" y="222.5" width="1.1" height="5.5" fill="#000"/><rect x="1107.2" y="229.5" width="1.1" height="5.5" fill="#000"/><rect x="1107.2" y="236.5" width="1.1" height="5.5" fill="#000"/><rect x="1107.2" y="243.5" width="1.1" height="5.5" fill="#000"/><rect x="1107.2" y="250.5" width="1.1" height="5.5" fill="#000"/><rect x="1107.2" y="257.5" width="1.1" height="5.5" fill="#000"/><rect x="1107.2" y="264.5" width="1.1" height="5.5" fill="#000"/><rect x="1107.2" y="271.5" width="1.1" height="5.5" fill="#000"/><rect x="1107.2" y="278.5" width="1.1" height="5.5" fill="#000"/><rect x="1151.5" y="200" width="4.5" height="85" fill="#52101e"/><rect x="1153.2" y="201.5" width="1.1" height="5.5" fill="#000"/><rect x="1153.2" y="208.5" width="1.1" height="5.5" fill="#000"/><rect x="1153.2" y="215.5" width="1.1" height="5.5" fill="#000"/><rect x="1153.2" y="222.5" width="1.1" height="5.5" fill="#000"/><rect x="1153.2" y="229.5" width="1.1" height="5.5" fill="#000"/><rect x="1153.2" y="236.5" width="1.1" height="5.5" fill="#000"/><rect x="1153.2" y="243.5" width="1.1" height="5.5" fill="#000"/><rect x="1153.2" y="250.5" width="1.1" height="5.5" fill="#000"/><rect x="1153.2" y="257.5" width="1.1" height="5.5" fill="#000"/><rect x="1153.2" y="264.5" width="1.1" height="5.5" fill="#000"/><rect x="1153.2" y="271.5" width="1.1" height="5.5" fill="#000"/><rect x="1153.2" y="278.5" width="1.1" height="5.5" fill="#000"/><rect x="1029.0" y="200" width="4.5" height="85" fill="#0c400d"/><rect x="1030.7" y="201.5" width="1.1" height="5.5" fill="#000"/><rect x="1030.7" y="208.5" width="1.1" height="5.5" fill="#000"/><rect x="1030.7" y="215.5" width="1.1" height="5.5" fill="#000"/><rect x="1030.7" y="222.5" width="1.1" height="5.5" fill="#000"/><rect x="1030.7" y="229.5" width="1.1" height="5.5" fill="#000"/><rect x="1030.7" y="236.5" width="1.1" height="5.5" fill="#000"/><rect x="1030.7" y="243.5" width="1.1" height="5.5" fill="#000"/><rect x="1030.7" y="250.5" width="1.1" height="5.5" fill="#000"/><rect x="1030.7" y="257.5" width="1.1" height="5.5" fill="#000"/><rect x="1030.7" y="264.5" width="1.1" height="5.5" fill="#000"/><rect x="1030.7" y="271.5" width="1.1" height="5.5" fill="#000"/><rect x="1030.7" y="278.5" width="1.1" height="5.5" fill="#000"/><rect x="1132.0" y="200" width="4.5" height="85" fill="#0c400d"/><rect x="1133.7" y="201.5" width="1.1" height="5.5" fill="#000"/><rect x="1133.7" y="208.5" width="1.1" height="5.5" fill="#000"/><rect x="1133.7" y="215.5" width="1.1" height="5.5" fill="#000"/><rect x="1133.7" y="222.5" width="1.1" height="5.5" fill="#000"/><rect x="1133.7" y="229.5" width="1.1" height="5.5" fill="#000"/><rect x="1133.7" y="236.5" width="1.1" height="5.5" fill="#000"/><rect x="1133.7" y="243.5" width="1.1" height="5.5" fill="#000"/><rect x="1133.7" y="250.5" width="1.1" height="5.5" fill="#000"/><rect x="1133.7" y="257.5" width="1.1" height="5.5" fill="#000"/><rect x="1133.7" y="264.5" width="1.1" height="5.5" fill="#000"/><rect x="1133.7" y="271.5" width="1.1" height="5.5" fill="#000"/><rect x="1133.7" y="278.5" width="1.1" height="5.5" fill="#000"/><rect x="1009.5" y="290" width="4.5" height="82" fill="#52101e"/><rect x="1011.2" y="291.5" width="1.1" height="5.5" fill="#000"/><rect x="1011.2" y="298.5" width="1.1" height="5.5" fill="#000"/><rect x="1011.2" y="305.5" width="1.1" height="5.5" fill="#000"/><rect x="1011.2" y="312.5" width="1.1" height="5.5" fill="#000"/><rect x="1011.2" y="319.5" width="1.1" height="5.5" fill="#000"/><rect x="1011.2" y="326.5" width="1.1" height="5.5" fill="#000"/><rect x="1011.2" y="333.5" width="1.1" height="5.5" fill="#000"/><rect x="1011.2" y="340.5" width="1.1" height="5.5" fill="#000"/><rect x="1011.2" y="347.5" width="1.1" height="5.5" fill="#000"/><rect x="1011.2" y="354.5" width="1.1" height="5.5" fill="#000"/><rect x="1011.2" y="361.5" width="1.1" height="5.5" fill="#000"/><rect x="1011.2" y="368.5" width="1.1" height="5.5" fill="#000"/><rect x="1105.5" y="290" width="4.5" height="82" fill="#52101e"/><rect x="1107.2" y="291.5" width="1.1" height="5.5" fill="#000"/><rect x="1107.2" y="298.5" width="1.1" height="5.5" fill="#000"/><rect x="1107.2" y="305.5" width="1.1" height="5.5" fill="#000"/><rect x="1107.2" y="312.5" width="1.1" height="5.5" fill="#000"/><rect x="1107.2" y="319.5" width="1.1" height="5.5" fill="#000"/><rect x="1107.2" y="326.5" width="1.1" height="5.5" fill="#000"/><rect x="1107.2" y="333.5" width="1.1" height="5.5" fill="#000"/><rect x="1107.2" y="340.5" width="1.1" height="5.5" fill="#000"/><rect x="1107.2" y="347.5" width="1.1" height="5.5" fill="#000"/><rect x="1107.2" y="354.5" width="1.1" height="5.5" fill="#000"/><rect x="1107.2" y="361.5" width="1.1" height="5.5" fill="#000"/><rect x="1107.2" y="368.5" width="1.1" height="5.5" fill="#000"/><rect x="1151.5" y="290" width="4.5" height="82" fill="#52101e"/><rect x="1153.2" y="291.5" width="1.1" height="5.5" fill="#000"/><rect x="1153.2" y="298.5" width="1.1" height="5.5" fill="#000"/><rect x="1153.2" y="305.5" width="1.1" height="5.5" fill="#000"/><rect x="1153.2" y="312.5" width="1.1" height="5.5" fill="#000"/><rect x="1153.2" y="319.5" width="1.1" height="5.5" fill="#000"/><rect x="1153.2" y="326.5" width="1.1" height="5.5" fill="#000"/><rect x="1153.2" y="333.5" width="1.1" height="5.5" fill="#000"/><rect x="1153.2" y="340.5" width="1.1" height="5.5" fill="#000"/><rect x="1153.2" y="347.5" width="1.1" height="5.5" fill="#000"/><rect x="1153.2" y="354.5" width="1.1" height="5.5" fill="#000"/><rect x="1153.2" y="361.5" width="1.1" height="5.5" fill="#000"/><rect x="1153.2" y="368.5" width="1.1" height="5.5" fill="#000"/><rect x="1029.0" y="290" width="4.5" height="82" fill="#0c400d"/><rect x="1030.7" y="291.5" width="1.1" height="5.5" fill="#000"/><rect x="1030.7" y="298.5" width="1.1" height="5.5" fill="#000"/><rect x="1030.7" y="305.5" width="1.1" height="5.5" fill="#000"/><rect x="1030.7" y="312.5" width="1.1" height="5.5" fill="#000"/><rect x="1030.7" y="319.5" width="1.1" height="5.5" fill="#000"/><rect x="1030.7" y="326.5" width="1.1" height="5.5" fill="#000"/><rect x="1030.7" y="333.5" width="1.1" height="5.5" fill="#000"/><rect x="1030.7" y="340.5" width="1.1" height="5.5" fill="#000"/><rect x="1030.7" y="347.5" width="1.1" height="5.5" fill="#000"/><rect x="1030.7" y="354.5" width="1.1" height="5.5" fill="#000"/><rect x="1030.7" y="361.5" width="1.1" height="5.5" fill="#000"/><rect x="1030.7" y="368.5" width="1.1" height="5.5" fill="#000"/><rect x="1132.0" y="290" width="4.5" height="82" fill="#0c400d"/><rect x="1133.7" y="291.5" width="1.1" height="5.5" fill="#000"/><rect x="1133.7" y="298.5" width="1.1" height="5.5" fill="#000"/><rect x="1133.7" y="305.5" width="1.1" height="5.5" fill="#000"/><rect x="1133.7" y="312.5" width="1.1" height="5.5" fill="#000"/><rect x="1133.7" y="319.5" width="1.1" height="5.5" fill="#000"/><rect x="1133.7" y="326.5" width="1.1" height="5.5" fill="#000"/><rect x="1133.7" y="333.5" width="1.1" height="5.5" fill="#000"/><rect x="1133.7" y="340.5" width="1.1" height="5.5" fill="#000"/><rect x="1133.7" y="347.5" width="1.1" height="5.5" fill="#000"/><rect x="1133.7" y="354.5" width="1.1" height="5.5" fill="#000"/><rect x="1133.7" y="361.5" width="1.1" height="5.5" fill="#000"/><rect x="1133.7" y="368.5" width="1.1" height="5.5" fill="#000"/><rect x="1009.5" y="376" width="4.5" height="86" fill="#52101e"/><rect x="1011.2" y="377.5" width="1.1" height="5.5" fill="#000"/><rect x="1011.2" y="384.5" width="1.1" height="5.5" fill="#000"/><rect x="1011.2" y="391.5" width="1.1" height="5.5" fill="#000"/><rect x="1011.2" y="398.5" width="1.1" height="5.5" fill="#000"/><rect x="1011.2" y="405.5" width="1.1" height="5.5" fill="#000"/><rect x="1011.2" y="412.5" width="1.1" height="5.5" fill="#000"/><rect x="1011.2" y="419.5" width="1.1" height="5.5" fill="#000"/><rect x="1011.2" y="426.5" width="1.1" height="5.5" fill="#000"/><rect x="1011.2" y="433.5" width="1.1" height="5.5" fill="#000"/><rect x="1011.2" y="440.5" width="1.1" height="5.5" fill="#000"/><rect x="1011.2" y="447.5" width="1.1" height="5.5" fill="#000"/><rect x="1011.2" y="454.5" width="1.1" height="5.5" fill="#000"/><rect x="1105.5" y="376" width="4.5" height="86" fill="#52101e"/><rect x="1107.2" y="377.5" width="1.1" height="5.5" fill="#000"/><rect x="1107.2" y="384.5" width="1.1" height="5.5" fill="#000"/><rect x="1107.2" y="391.5" width="1.1" height="5.5" fill="#000"/><rect x="1107.2" y="398.5" width="1.1" height="5.5" fill="#000"/><rect x="1107.2" y="405.5" width="1.1" height="5.5" fill="#000"/><rect x="1107.2" y="412.5" width="1.1" height="5.5" fill="#000"/><rect x="1107.2" y="419.5" width="1.1" height="5.5" fill="#000"/><rect x="1107.2" y="426.5" width="1.1" height="5.5" fill="#000"/><rect x="1107.2" y="433.5" width="1.1" height="5.5" fill="#000"/><rect x="1107.2" y="440.5" width="1.1" height="5.5" fill="#000"/><rect x="1107.2" y="447.5" width="1.1" height="5.5" fill="#000"/><rect x="1107.2" y="454.5" width="1.1" height="5.5" fill="#000"/><rect x="1151.5" y="376" width="4.5" height="86" fill="#52101e"/><rect x="1153.2" y="377.5" width="1.1" height="5.5" fill="#000"/><rect x="1153.2" y="384.5" width="1.1" height="5.5" fill="#000"/><rect x="1153.2" y="391.5" width="1.1" height="5.5" fill="#000"/><rect x="1153.2" y="398.5" width="1.1" height="5.5" fill="#000"/><rect x="1153.2" y="405.5" width="1.1" height="5.5" fill="#000"/><rect x="1153.2" y="412.5" width="1.1" height="5.5" fill="#000"/><rect x="1153.2" y="419.5" width="1.1" height="5.5" fill="#000"/><rect x="1153.2" y="426.5" width="1.1" height="5.5" fill="#000"/><rect x="1153.2" y="433.5" width="1.1" height="5.5" fill="#000"/><rect x="1153.2" y="440.5" width="1.1" height="5.5" fill="#000"/><rect x="1153.2" y="447.5" width="1.1" height="5.5" fill="#000"/><rect x="1153.2" y="454.5" width="1.1" height="5.5" fill="#000"/><rect x="1029.0" y="376" width="4.5" height="86" fill="#0c400d"/><rect x="1030.7" y="377.5" width="1.1" height="5.5" fill="#000"/><rect x="1030.7" y="384.5" width="1.1" height="5.5" fill="#000"/><rect x="1030.7" y="391.5" width="1.1" height="5.5" fill="#000"/><rect x="1030.7" y="398.5" width="1.1" height="5.5" fill="#000"/><rect x="1030.7" y="405.5" width="1.1" height="5.5" fill="#000"/><rect x="1030.7" y="412.5" width="1.1" height="5.5" fill="#000"/><rect x="1030.7" y="419.5" width="1.1" height="5.5" fill="#000"/><rect x="1030.7" y="426.5" width="1.1" height="5.5" fill="#000"/><rect x="1030.7" y="433.5" width="1.1" height="5.5" fill="#000"/><rect x="1030.7" y="440.5" width="1.1" height="5.5" fill="#000"/><rect x="1030.7" y="447.5" width="1.1" height="5.5" fill="#000"/><rect x="1030.7" y="454.5" width="1.1" height="5.5" fill="#000"/><rect x="1132.0" y="376" width="4.5" height="86" fill="#0c400d"/><rect x="1133.7" y="377.5" width="1.1" height="5.5" fill="#000"/><rect x="1133.7" y="384.5" width="1.1" height="5.5" fill="#000"/><rect x="1133.7" y="391.5" width="1.1" height="5.5" fill="#000"/><rect x="1133.7" y="398.5" width="1.1" height="5.5" fill="#000"/><rect x="1133.7" y="405.5" width="1.1" height="5.5" fill="#000"/><rect x="1133.7" y="412.5" width="1.1" height="5.5" fill="#000"/><rect x="1133.7" y="419.5" width="1.1" height="5.5" fill="#000"/><rect x="1133.7" y="426.5" width="1.1" height="5.5" fill="#000"/><rect x="1133.7" y="433.5" width="1.1" height="5.5" fill="#000"/><rect x="1133.7" y="440.5" width="1.1" height="5.5" fill="#000"/><rect x="1133.7" y="447.5" width="1.1" height="5.5" fill="#000"/><rect x="1133.7" y="454.5" width="1.1" height="5.5" fill="#000"/><rect x="1009.5" y="466" width="4.5" height="85" fill="#52101e"/><rect x="1011.2" y="467.5" width="1.1" height="5.5" fill="#000"/><rect x="1011.2" y="474.5" width="1.1" height="5.5" fill="#000"/><rect x="1011.2" y="481.5" width="1.1" height="5.5" fill="#000"/><rect x="1011.2" y="488.5" width="1.1" height="5.5" fill="#000"/><rect x="1011.2" y="495.5" width="1.1" height="5.5" fill="#000"/><rect x="1011.2" y="502.5" width="1.1" height="5.5" fill="#000"/><rect x="1011.2" y="509.5" width="1.1" height="5.5" fill="#000"/><rect x="1011.2" y="516.5" width="1.1" height="5.5" fill="#000"/><rect x="1011.2" y="523.5" width="1.1" height="5.5" fill="#000"/><rect x="1011.2" y="530.5" width="1.1" height="5.5" fill="#000"/><rect x="1011.2" y="537.5" width="1.1" height="5.5" fill="#000"/><rect x="1011.2" y="544.5" width="1.1" height="5.5" fill="#000"/><rect x="1105.5" y="466" width="4.5" height="85" fill="#52101e"/><rect x="1107.2" y="467.5" width="1.1" height="5.5" fill="#000"/><rect x="1107.2" y="474.5" width="1.1" height="5.5" fill="#000"/><rect x="1107.2" y="481.5" width="1.1" height="5.5" fill="#000"/><rect x="1107.2" y="488.5" width="1.1" height="5.5" fill="#000"/><rect x="1107.2" y="495.5" width="1.1" height="5.5" fill="#000"/><rect x="1107.2" y="502.5" width="1.1" height="5.5" fill="#000"/><rect x="1107.2" y="509.5" width="1.1" height="5.5" fill="#000"/><rect x="1107.2" y="516.5" width="1.1" height="5.5" fill="#000"/><rect x="1107.2" y="523.5" width="1.1" height="5.5" fill="#000"/><rect x="1107.2" y="530.5" width="1.1" height="5.5" fill="#000"/><rect x="1107.2" y="537.5" width="1.1" height="5.5" fill="#000"/><rect x="1107.2" y="544.5" width="1.1" height="5.5" fill="#000"/><rect x="1151.5" y="466" width="4.5" height="85" fill="#52101e"/><rect x="1153.2" y="467.5" width="1.1" height="5.5" fill="#000"/><rect x="1153.2" y="474.5" width="1.1" height="5.5" fill="#000"/><rect x="1153.2" y="481.5" width="1.1" height="5.5" fill="#000"/><rect x="1153.2" y="488.5" width="1.1" height="5.5" fill="#000"/><rect x="1153.2" y="495.5" width="1.1" height="5.5" fill="#000"/><rect x="1153.2" y="502.5" width="1.1" height="5.5" fill="#000"/><rect x="1153.2" y="509.5" width="1.1" height="5.5" fill="#000"/><rect x="1153.2" y="516.5" width="1.1" height="5.5" fill="#000"/><rect x="1153.2" y="523.5" width="1.1" height="5.5" fill="#000"/><rect x="1153.2" y="530.5" width="1.1" height="5.5" fill="#000"/><rect x="1153.2" y="537.5" width="1.1" height="5.5" fill="#000"/><rect x="1153.2" y="544.5" width="1.1" height="5.5" fill="#000"/><rect x="1029.0" y="466" width="4.5" height="85" fill="#0c400d"/><rect x="1030.7" y="467.5" width="1.1" height="5.5" fill="#000"/><rect x="1030.7" y="474.5" width="1.1" height="5.5" fill="#000"/><rect x="1030.7" y="481.5" width="1.1" height="5.5" fill="#000"/><rect x="1030.7" y="488.5" width="1.1" height="5.5" fill="#000"/><rect x="1030.7" y="495.5" width="1.1" height="5.5" fill="#000"/><rect x="1030.7" y="502.5" width="1.1" height="5.5" fill="#000"/><rect x="1030.7" y="509.5" width="1.1" height="5.5" fill="#000"/><rect x="1030.7" y="516.5" width="1.1" height="5.5" fill="#000"/><rect x="1030.7" y="523.5" width="1.1" height="5.5" fill="#000"/><rect x="1030.7" y="530.5" width="1.1" height="5.5" fill="#000"/><rect x="1030.7" y="537.5" width="1.1" height="5.5" fill="#000"/><rect x="1030.7" y="544.5" width="1.1" height="5.5" fill="#000"/><rect x="1132.0" y="466" width="4.5" height="85" fill="#0c400d"/><rect x="1133.7" y="467.5" width="1.1" height="5.5" fill="#000"/><rect x="1133.7" y="474.5" width="1.1" height="5.5" fill="#000"/><rect x="1133.7" y="481.5" width="1.1" height="5.5" fill="#000"/><rect x="1133.7" y="488.5" width="1.1" height="5.5" fill="#000"/><rect x="1133.7" y="495.5" width="1.1" height="5.5" fill="#000"/><rect x="1133.7" y="502.5" width="1.1" height="5.5" fill="#000"/><rect x="1133.7" y="509.5" width="1.1" height="5.5" fill="#000"/><rect x="1133.7" y="516.5" width="1.1" height="5.5" fill="#000"/><rect x="1133.7" y="523.5" width="1.1" height="5.5" fill="#000"/><rect x="1133.7" y="530.5" width="1.1" height="5.5" fill="#000"/><rect x="1133.7" y="537.5" width="1.1" height="5.5" fill="#000"/><rect x="1133.7" y="544.5" width="1.1" height="5.5" fill="#000"/><rect x="986.5" y="198.5" width="99" height="174.5" fill="none" stroke="#82aa52" stroke-width="1.1"/><rect x="1087" y="198.5" width="126" height="174.5" fill="none" stroke="#4f22c0" stroke-width="1.1"/><rect x="986.5" y="375.5" width="99" height="177" fill="none" stroke="#8497d0" stroke-width="1.1"/><rect x="1087" y="375.5" width="126" height="177" fill="none" stroke="#d81eae" stroke-width="1.1"/><rect x="886.5" y="196" width="330.5" height="359.5" fill="none" stroke="#7c7c7c" stroke-width="1.2"/><rect x="926" y="344" width="21" height="63" fill="#d6620e"/><path d="M968.6 276 V477 M975 274 V477" stroke="#e8700f" stroke-width="3.1" stroke-linecap="round" stroke-dasharray="0.01 3.2"/><rect x="1048.7" y="251.7" width="6.6" height="26.2" rx="1" fill="none" stroke="#8e8e8e" stroke-width="1.1"/><rect x="1049" y="278" width="6.2" height="8" fill="#ff22d2"/><rect x="1048.8" y="381.5" width="6.6" height="8.899999999999977" rx="1" fill="none" stroke="#8e8e8e" stroke-width="1.1"/><rect x="1048.8" y="396" width="6.6" height="8.800000000000011" rx="1" fill="none" stroke="#8e8e8e" stroke-width="1.1"/><rect x="1048.8" y="416.8" width="6.6" height="6.6" rx="1" fill="none" stroke="#8e8e8e" stroke-width="1.1"/><rect x="1048.8" y="424.2" width="6.6" height="6.6" rx="1" fill="none" stroke="#8e8e8e" stroke-width="1.1"/><rect x="1048.8" y="431.6" width="6.6" height="6.6" rx="1" fill="none" stroke="#8e8e8e" stroke-width="1.1"/><rect x="1048.8" y="439.0" width="6.6" height="6.6" rx="1" fill="none" stroke="#8e8e8e" stroke-width="1.1"/><rect x="1048.8" y="446.4" width="6.6" height="6.6" rx="1" fill="none" stroke="#8e8e8e" stroke-width="1.1"/><rect x="1048.8" y="461.2" width="6.6" height="6.2" rx="1" fill="none" stroke="#8e8e8e" stroke-width="1.1"/><rect x="1048.8" y="468.0" width="6.6" height="6.2" rx="1" fill="none" stroke="#8e8e8e" stroke-width="1.1"/><rect x="1048.8" y="474.8" width="6.6" height="6.2" rx="1" fill="none" stroke="#8e8e8e" stroke-width="1.1"/><rect x="1086" y="272.6" width="4" height="26.399999999999977" fill="none" stroke="#b07a2a" stroke-width="0.9"/><path d="M1086 272.6 V299" stroke="#b07a2a" stroke-width="4" stroke-dasharray="0.8 2" transform="translate(2,0)"/><rect x="1086" y="448" width="4" height="28" fill="none" stroke="#b07a2a" stroke-width="0.9"/><path d="M1086 448 V476" stroke="#b07a2a" stroke-width="4" stroke-dasharray="0.8 2" transform="translate(2,0)"/><path d="M1087.5 376 V392" stroke="#d05040" stroke-width="1.5"/><rect x="1187" y="199.5" width="5.8" height="45.0" fill="none" stroke="#c88a30" stroke-width="1"/><rect x="1187" y="244.8" width="5.8" height="7.1" fill="none" stroke="#c88a30" stroke-width="1"/><rect x="1187" y="253.0" width="5.8" height="7.1" fill="none" stroke="#c88a30" stroke-width="1"/><rect x="1187" y="261.1" width="5.8" height="7.1" fill="none" stroke="#c88a30" stroke-width="1"/><rect x="1187" y="269.2" width="5.8" height="7.1" fill="none" stroke="#c88a30" stroke-width="1"/><rect x="1187" y="277.4" width="5.8" height="7.1" fill="none" stroke="#c88a30" stroke-width="1"/><rect x="1194" y="202" width="4.3" height="43.2" rx="1.5" fill="none" stroke="#c88a30" stroke-width="1"/><rect x="1194" y="245.2" width="4.3" height="40.7" rx="1.5" fill="none" stroke="#c88a30" stroke-width="1"/><rect x="1199.3" y="203" width="5.8" height="80.5" fill="#5e5030"/><path d="M1202.2 203 V283.5" stroke="#a08a50" stroke-width="5.8" stroke-dasharray="1 1.6"/><rect x="1206" y="199" width="6.8" height="86.5" fill="#8cef1e"/><rect x="1187" y="289.5" width="5.8" height="43.7" fill="none" stroke="#c88a30" stroke-width="1"/><rect x="1187" y="333.5" width="5.8" height="6.9" fill="none" stroke="#c88a30" stroke-width="1"/><rect x="1187" y="341.4" width="5.8" height="6.9" fill="none" stroke="#c88a30" stroke-width="1"/><rect x="1187" y="349.3" width="5.8" height="6.9" fill="none" stroke="#c88a30" stroke-width="1"/><rect x="1187" y="357.2" width="5.8" height="6.9" fill="none" stroke="#c88a30" stroke-width="1"/><rect x="1187" y="365.1" width="5.8" height="6.9" fill="none" stroke="#c88a30" stroke-width="1"/><rect x="1194" y="292" width="4.3" height="42.0" rx="1.5" fill="none" stroke="#c88a30" stroke-width="1"/><rect x="1194" y="334.0" width="4.3" height="39.5" rx="1.5" fill="none" stroke="#c88a30" stroke-width="1"/><rect x="1199.3" y="293" width="5.8" height="78" fill="#5e5030"/><path d="M1202.2 293 V371" stroke="#a08a50" stroke-width="5.8" stroke-dasharray="1 1.6"/><rect x="1206" y="289" width="6.8" height="84" fill="#8cef1e"/><rect x="1187" y="376.0" width="5.8" height="45.5" fill="none" stroke="#c88a30" stroke-width="1"/><rect x="1187" y="421.9" width="5.8" height="7.2" fill="none" stroke="#c88a30" stroke-width="1"/><rect x="1187" y="430.1" width="5.8" height="7.2" fill="none" stroke="#c88a30" stroke-width="1"/><rect x="1187" y="438.3" width="5.8" height="7.2" fill="none" stroke="#c88a30" stroke-width="1"/><rect x="1187" y="446.6" width="5.8" height="7.2" fill="none" stroke="#c88a30" stroke-width="1"/><rect x="1187" y="454.8" width="5.8" height="7.2" fill="none" stroke="#c88a30" stroke-width="1"/><rect x="1194" y="378.5" width="4.3" height="43.8" rx="1.5" fill="none" stroke="#c88a30" stroke-width="1"/><rect x="1194" y="422.2" width="4.3" height="41.1" rx="1.5" fill="none" stroke="#c88a30" stroke-width="1"/><rect x="1199.3" y="379.5" width="5.8" height="81.5" fill="#5e5030"/><path d="M1202.2 379.5 V461" stroke="#a08a50" stroke-width="5.8" stroke-dasharray="1 1.6"/><rect x="1206" y="375.5" width="6.8" height="87.5" fill="#2020cc"/><rect x="1187" y="466.5" width="5.8" height="44.7" fill="none" stroke="#c88a30" stroke-width="1"/><rect x="1187" y="511.6" width="5.8" height="7.1" fill="none" stroke="#c88a30" stroke-width="1"/><rect x="1187" y="519.7" width="5.8" height="7.1" fill="none" stroke="#c88a30" stroke-width="1"/><rect x="1187" y="527.7" width="5.8" height="7.1" fill="none" stroke="#c88a30" stroke-width="1"/><rect x="1187" y="535.8" width="5.8" height="7.1" fill="none" stroke="#c88a30" stroke-width="1"/><rect x="1187" y="543.9" width="5.8" height="7.1" fill="none" stroke="#c88a30" stroke-width="1"/><rect x="1194" y="469" width="4.3" height="43.0" rx="1.5" fill="none" stroke="#c88a30" stroke-width="1"/><rect x="1194" y="512.0" width="4.3" height="40.4" rx="1.5" fill="none" stroke="#c88a30" stroke-width="1"/><rect x="1199.3" y="470" width="5.8" height="80" fill="#5e5030"/><path d="M1202.2 470 V550" stroke="#a08a50" stroke-width="5.8" stroke-dasharray="1 1.6"/><rect x="1206" y="466" width="6.8" height="86" fill="#2020cc"/><rect x="1187" y="285.5" width="26" height="3.5" fill="#000"/><rect x="1187" y="463" width="26" height="3" fill="#000"/><text x="988" y="373" font-family="Liberation Sans" font-weight="700" font-size="16" fill="#a6d46a">X0Y1</text><text x="1089" y="373" font-family="Liberation Sans" font-weight="700" font-size="16" fill="#5b2ee0">X1Y1</text><text x="988" y="551" font-family="Liberation Sans" font-weight="700" font-size="16" fill="#8eaaea">X0Y0</text><text x="1089" y="551" font-family="Liberation Sans" font-weight="700" font-size="16" fill="#e82ec6">X1Y0</text></svg>
<div style="position:absolute;left:235px;top:585px;width:1256px;height:284px;border:1px solid #d9d9d9;box-sizing:border-box;box-shadow:inset 0 0 0 2px #e6e6e6;background:#fff"></div>
<div style="position:absolute;left:238px;top:588px;width:1250px;height:28px;background:#ebebeb"></div>
<div style="position:absolute;left:645px;top:588px;width:77px;height:28px;background:#fff"></div>
<div class="t" style="left:243.19px;top:595.3px;font-size:11.0px;font-weight:700;color:#8c8c8c;line-height:16px;">Tcl Console</div>
<div class="t" style="left:325.27px;top:595.3px;font-size:11.19px;font-weight:700;color:#8c8c8c;line-height:16px;">Messages</div>
<div class="t" style="left:399.96px;top:595.3px;font-size:11.35px;font-weight:700;color:#8c8c8c;line-height:16px;">Log</div>
<div class="t" style="left:440.95px;top:595.3px;font-size:11.61px;font-weight:700;color:#8c8c8c;line-height:16px;">Reports</div>
<div class="t" style="left:504.97px;top:595.3px;font-size:11.26px;font-weight:700;color:#8c8c8c;line-height:16px;">Design Runs</div>
<div class="t" style="left:594.26px;top:595.3px;font-size:11.4px;font-weight:700;color:#8c8c8c;line-height:16px;">Power</div>
<div style="position:absolute;left:320px;top:592px;width:1px;height:22px;background:#d3d3d3"></div>
<div style="position:absolute;left:394px;top:592px;width:1px;height:22px;background:#d3d3d3"></div>
<div style="position:absolute;left:436px;top:592px;width:1px;height:22px;background:#d3d3d3"></div>
<div style="position:absolute;left:500px;top:592px;width:1px;height:22px;background:#d3d3d3"></div>
<div style="position:absolute;left:589px;top:592px;width:1px;height:22px;background:#d3d3d3"></div>
<div class="t" style="left:650.28px;top:595.3px;font-size:11.81px;font-weight:700;color:#111;line-height:16px;">Timing</div>
<svg style="position:absolute;left:709.2px;top:600.0px;" width="7" height="7" viewBox="0 0 7 7"><path d="M0.5 0.5 L6.5 6.5 M6.5 0.5 L0.5 6.5" stroke="#8a8a8a" stroke-width="1.1"/></svg>
<svg style="position:absolute;left:1421px;top:600px;" width="8" height="9" viewBox="0 0 8 9"><path d="M1 2.8 Q1 0.6 4 0.6 Q7 0.6 7 2.8 Q7 4.3 4.8 5 Q4 5.3 4 6.2" fill="none" stroke="#8a8a8a" stroke-width="1.6"/><rect x="3.1" y="7.3" width="1.8" height="1.7" fill="#8a8a8a"/></svg>
<div style="position:absolute;left:1438px;top:607px;width:8px;height:2px;background:#8a8a8a"></div>
<svg style="position:absolute;left:1455px;top:600px;" width="9" height="9" viewBox="0 0 9 9"><rect x="0.8" y="0.8" width="7.4" height="7.4" fill="none" stroke="#8a8a8a" stroke-width="1.6"/></svg>
<svg style="position:absolute;left:1472px;top:600px;" width="9" height="9" viewBox="0 0 9 9"><path d="M4 0.8 H0.8 V8.2 H8.2 V5" fill="none" stroke="#8a8a8a" stroke-width="1.6"/><path d="M4.5 4.5 L8.5 0.5" stroke="#8a8a8a" stroke-width="1.2"/></svg>
<div style="position:absolute;left:238px;top:647px;width:1250px;height:2px;background:#e6e6e6"></div>
<div style="position:absolute;left:270px;top:623px;width:1px;height:19px;background:#e2e2e2"></div>
<div style="position:absolute;left:304px;top:623px;width:1px;height:19px;background:#e2e2e2"></div>
<div style="position:absolute;left:336px;top:623px;width:1px;height:19px;background:#e2e2e2"></div>
<div style="position:absolute;left:369px;top:623px;width:1px;height:19px;background:#e2e2e2"></div>
<svg style="position:absolute;left:248px;top:626px;" width="12" height="12" viewBox="0 0 12 12"><circle cx="5" cy="5" r="4" fill="none" stroke="#2f4f8f" stroke-width="1.5"/><path d="M8 8 L11.5 11.5" stroke="#2f4f8f" stroke-width="1.8"/></svg>
<svg style="position:absolute;left:281.5px;top:625.5px;" width="11" height="13" viewBox="0 0 11 13"><path d="M0 6.5 H11" stroke="#2f4f8f" stroke-width="1.6"/><path d="M0.5 0.5 H10.5 L5.5 5 Z M0.5 12.5 H10.5 L5.5 8 Z" fill="#2f4f8f"/></svg>
<svg style="position:absolute;left:314.5px;top:625.5px;" width="11" height="13" viewBox="0 0 11 13"><path d="M0.5 5 L5.5 0.5 L10.5 5 Z M0.5 8 L5.5 12.5 L10.5 8 Z" fill="#2f4f8f"/><path d="M0 6.5 H11" stroke="#2f4f8f" stroke-width="1.2"/></svg>
<svg style="position:absolute;left:346.5px;top:625.5px;" width="12" height="12" viewBox="0 0 12 12"><circle cx="6" cy="6" r="5.5" fill="#c8c8c8"/></svg>
<svg style="position:absolute;left:486px;top:623px;" width="6" height="18" viewBox="0 0 6 18"><path d="M5 0.5 V7.5 L1 4 Z M1 10.5 V17.5 L5 14 Z" fill="#222"/></svg>
<div style="position:absolute;left:493px;top:616px;width:1px;height:223px;background:#e3e3e3"></div>
<div class="t" style="left:498.26px;top:625.3px;font-size:11.46px;font-weight:700;color:#111;line-height:16px;">Design Timing Summary</div>
<div style="position:absolute;left:273px;top:693px;width:129px;height:22px;background:#cfe0fb"></div>
<div class="t" style="left:272.7px;top:653.0px;font-size:11.93px;font-weight:400;color:#1e1e1e;line-height:16px;">General Information</div>
<div class="t" style="left:273.07px;top:674.7px;font-size:11.71px;font-weight:400;color:#1e1e1e;line-height:16px;">Timer Settings</div>
<div class="t" style="left:272.36px;top:697.0px;font-size:11.72px;font-weight:400;color:#1e1e1e;line-height:16px;">Design Timing Summary</div>
<div class="t" style="left:272.73px;top:718.7px;font-size:11.45px;font-weight:400;color:#1e1e1e;line-height:16px;">Clock Summary <span style="color:#9a9a9a">(1)</span></div>
<div class="t" style="left:272.35px;top:740.3px;font-size:11.93px;font-weight:400;color:#1e1e1e;line-height:16px;">Methodology Summary</div>
<div class="t" style="left:272.72px;top:762.7px;font-size:11.65px;font-weight:400;color:#1e1e1e;line-height:16px;">Check Timing <span style="color:#9a9a9a">(0)</span></div>
<div class="t" style="left:272.44px;top:784.3px;font-size:11.41px;font-weight:400;color:#1e1e1e;line-height:16px;">User Ignored Paths</div>
<div class="t" style="left:272.44px;top:806.3px;font-size:11.44px;font-weight:400;color:#1e1e1e;line-height:16px;">Unconstrained Paths</div>
<svg style="position:absolute;left:247.5px;top:766.2px;" width="6" height="9" viewBox="0 0 6 9"><path d="M0.8 0.8 L4.8 4.5 L0.8 8.2" fill="none" stroke="#666" stroke-width="1.2"/></svg>
<svg style="position:absolute;left:259px;top:765.5px;" width="11" height="10" viewBox="0 0 11 10"><path d="M0.5 1 H4 L5 2.5 H10 V9 H0.5 Z" fill="#e6e6e6" stroke="#cfcfcf" stroke-width="0.8"/><path d="M0.5 4 H10" stroke="#cfcfcf" stroke-width="0.8"/></svg>
<div class="t" style="left:507.35px;top:670.3px;font-size:11.57px;font-weight:700;color:#111;line-height:16px;">Setup</div>
<div style="position:absolute;left:507px;top:688px;width:202px;height:1px;background:#d8d8d8"></div>
<div class="t" style="left:528.24px;top:696.8px;font-size:11.46px;font-weight:400;color:#1e1e1e;line-height:16px;">Worst Negative Slack (WNS):</div>
<div class="t" style="left:687.32px;top:696.8px;font-size:11.6px;font-weight:400;color:#1e1e1e;line-height:16px;">NA</div>
<div class="t" style="left:528.07px;top:719.5px;font-size:11.59px;font-weight:400;color:#1e1e1e;line-height:16px;">Total Negative Slack (TNS):</div>
<div class="t" style="left:687.32px;top:719.5px;font-size:11.6px;font-weight:400;color:#1e1e1e;line-height:16px;">NA</div>
<div class="t" style="left:527.35px;top:742.1px;font-size:11.84px;font-weight:400;color:#1e1e1e;line-height:16px;">Number of Failing Endpoints:</div>
<div class="t" style="left:687.32px;top:742.1px;font-size:11.6px;font-weight:400;color:#1e1e1e;line-height:16px;">NA</div>
<div class="t" style="left:528.06px;top:764.8px;font-size:11.94px;font-weight:400;color:#1e1e1e;line-height:16px;">Total Number of Endpoints:</div>
<div class="t" style="left:687.32px;top:764.8px;font-size:11.6px;font-weight:400;color:#1e1e1e;line-height:16px;">NA</div>
<div class="t" style="left:724.9px;top:670.3px;font-size:12.25px;font-weight:700;color:#111;line-height:16px;">Hold</div>
<div style="position:absolute;left:725px;top:688px;width:202px;height:1px;background:#d8d8d8"></div>
<div class="t" style="left:745.74px;top:696.8px;font-size:11.56px;font-weight:400;color:#1e1e1e;line-height:16px;">Worst Hold Slack (WHS):</div>
<div class="t" style="left:905.42px;top:696.8px;font-size:11.6px;font-weight:400;color:#1e1e1e;line-height:16px;">NA</div>
<div class="t" style="left:745.57px;top:719.5px;font-size:11.66px;font-weight:400;color:#1e1e1e;line-height:16px;">Total Hold Slack (THS):</div>
<div class="t" style="left:905.42px;top:719.5px;font-size:11.6px;font-weight:400;color:#1e1e1e;line-height:16px;">NA</div>
<div class="t" style="left:744.85px;top:742.1px;font-size:11.87px;font-weight:400;color:#1e1e1e;line-height:16px;">Number of Failing Endpoints:</div>
<div class="t" style="left:905.42px;top:742.1px;font-size:11.6px;font-weight:400;color:#1e1e1e;line-height:16px;">NA</div>
<div class="t" style="left:745.56px;top:764.8px;font-size:11.97px;font-weight:400;color:#1e1e1e;line-height:16px;">Total Number of Endpoints:</div>
<div class="t" style="left:905.42px;top:764.8px;font-size:11.6px;font-weight:400;color:#1e1e1e;line-height:16px;">NA</div>
<div class="t" style="left:943.14px;top:670.3px;font-size:11.66px;font-weight:700;color:#111;line-height:16px;">Pulse Width</div>
<div style="position:absolute;left:943px;top:688px;width:264px;height:1px;background:#d8d8d8"></div>
<div class="t" style="left:963.94px;top:696.8px;font-size:11.23px;font-weight:400;color:#1e1e1e;line-height:16px;">Worst Pulse Width Slack (WPWS):</div>
<div class="t" style="left:1185.62px;top:696.8px;font-size:11.6px;font-weight:400;color:#1e1e1e;line-height:16px;">NA</div>
<div class="t" style="left:963.77px;top:719.5px;font-size:11.43px;font-weight:400;color:#1e1e1e;line-height:16px;">Total Pulse Width Negative Slack (TPWS):</div>
<div class="t" style="left:1185.62px;top:719.5px;font-size:11.6px;font-weight:400;color:#1e1e1e;line-height:16px;">NA</div>
<div class="t" style="left:963.05px;top:742.1px;font-size:11.82px;font-weight:400;color:#1e1e1e;line-height:16px;">Number of Failing Endpoints:</div>
<div class="t" style="left:1185.62px;top:742.1px;font-size:11.6px;font-weight:400;color:#1e1e1e;line-height:16px;">NA</div>
<div class="t" style="left:963.76px;top:764.8px;font-size:11.97px;font-weight:400;color:#1e1e1e;line-height:16px;">Total Number of Endpoints:</div>
<div class="t" style="left:1185.62px;top:764.8px;font-size:11.6px;font-weight:400;color:#1e1e1e;line-height:16px;">NA</div>
<div class="t" style="left:507.41px;top:788.7px;font-size:11.47px;font-weight:700;color:#111;line-height:16px;">All user specified timing constraints are met.</div>
<div style="position:absolute;left:238px;top:840px;width:1250px;height:26px;background:#f4f4f4"></div>
<div style="position:absolute;left:238px;top:839px;width:1250px;height:1px;background:repeating-linear-gradient(90deg,#c4c4c4 0 4px,transparent 4px 7px)"></div>
<div style="position:absolute;left:241.7px;top:843.3px;width:217.60000000000002px;height:19.40000000000009px;background:#fff;border:1px solid #dcdcdc;box-sizing:border-box"></div>
<div class="t" style="left:248.18px;top:845.5px;font-size:11.51px;font-weight:700;color:#111;line-height:16px;">Timing Summary - impl_1 (saved)</div>
<div style="position:absolute;left:0px;top:871px;width:1500px;height:20px;background:#eeeeee"></div>
<div style="position:absolute;left:0px;top:891px;width:1500px;height:47px;background:linear-gradient(90deg,#dfe9f6 0%,#dde7f5 25%,#d9e2f4 45%,#dfe6f5 60%,#e3ecf7 80%,#e4edf7 100%)"></div>
<div style="position:absolute;left:0px;top:891px;width:1250px;height:1px;background:#e6edf7"></div>
<svg style="position:absolute;left:414px;top:903.5px;" width="23" height="23" viewBox="0 0 23 23"><defs><linearGradient id="wl" x1="0" y1="0" x2="1" y2="1"><stop offset="0" stop-color="#49c6f5"/><stop offset="1" stop-color="#0a6fd0"/></linearGradient></defs><rect x="0" y="0" width="10.8" height="10.8" fill="url(#wl)"/><rect x="12.2" y="0" width="10.8" height="10.8" fill="url(#wl)"/><rect x="0" y="12.2" width="10.8" height="10.8" fill="url(#wl)"/><rect x="12.2" y="12.2" width="10.8" height="10.8" fill="url(#wl)"/></svg>
<div style="position:absolute;left:451px;top:900px;width:213px;height:29px;background:#f4f7fc;border-radius:15px;box-shadow:0 0 0 1px #e2e8f2"></div>
<svg style="position:absolute;left:462px;top:907px;" width="16" height="16" viewBox="0 0 16 16"><circle cx="9.5" cy="6.5" r="5" fill="none" stroke="#1a1a1a" stroke-width="1.6"/><path d="M6 10 L1.5 14.5" stroke="#1a1a1a" stroke-width="1.8"/></svg>
<div class="t" style="left:484.75px;top:907.2px;font-size:14px;font-weight:400;color:#5a5a5a;line-height:16px;">Поиск</div>
<svg style="position:absolute;left:676px;top:903px;" width="24" height="23" viewBox="0 0 24 23"><path d="M0 2 Q0 0 2 0 H8 L10 2.5 H22 Q24 2.5 24 4.5 V21 Q24 23 22 23 H2 Q0 23 0 21 Z" fill="#f2b72a"/><path d="M0 6 H24 V21 Q24 23 22 23 H2 Q0 23 0 21 Z" fill="#ffd54a"/><rect x="7" y="14" width="10" height="5" rx="1" fill="#1c6fd6"/></svg>
<div style="position:absolute;left:683px;top:930px;width:10px;height:3px;background:#6d6d6d;border-radius:2px"></div>
<svg style="position:absolute;left:719px;top:903px;" width="24" height="24" viewBox="0 0 24 24"><defs><linearGradient id="eg1" x1="0" y1="0" x2="1" y2="0.6"><stop offset="0" stop-color="#33b6f2"/><stop offset="1" stop-color="#62e07a"/></linearGradient><linearGradient id="eg2" x1="0" y1="0" x2="0.6" y2="1"><stop offset="0" stop-color="#1c8fe0"/><stop offset="1" stop-color="#1a4d98"/></linearGradient></defs><circle cx="12" cy="12" r="11.7" fill="url(#eg2)"/><path d="M0.5 10.5 Q1.5 0.3 12 0.3 Q23.6 0.3 23.6 10.5 Q23.6 15.6 18.5 15.6 Q14.5 15.6 14.5 13 Q14.5 9 10.5 8.5 Q3.5 8 0.5 14 Z" fill="url(#eg1)"/><path d="M9.5 13.5 Q9.5 17 13 19 Q17 21 21.5 18 L22 16.5 Q17 17.5 14.5 15.5 Q13.5 14.5 13.5 13.5 Z" fill="#dbe2f3"/><circle cx="12.2" cy="12.6" r="2.7" fill="#dbe2f3"/></svg>
<svg style="position:absolute;left:762px;top:903px;" width="24" height="24" viewBox="0 0 24 24"><rect x="0.5" y="6" width="23" height="17.5" rx="3" fill="#1e4d8f"/><path d="M7 6.5 V3 Q7 0.8 9 0.8 H15 Q17 0.8 17 3 V6.5" fill="none" stroke="#3aa0e8" stroke-width="1.6"/><rect x="7.5" y="10" width="4" height="4" fill="#f25022"/><rect x="12.5" y="10" width="4" height="4" fill="#7fba00"/><rect x="7.5" y="15" width="4" height="4" fill="#00a4ef"/><rect x="12.5" y="15" width="4" height="4" fill="#ffb900"/></svg>
<svg style="position:absolute;left:805px;top:903.5px;" width="24" height="24" viewBox="0 0 24 24"><circle cx="12" cy="12" r="11.8" fill="#5865f2"/><path d="M6 8 Q9 6.5 12 7 Q15 6.5 18 8 Q19.5 11.5 19 16 Q17 17.5 15.5 17.5 L14.8 16 Q12 17 9.2 16 L8.5 17.5 Q7 17.5 5 16 Q4.5 11.5 6 8 Z" fill="#fff"/><circle cx="9.5" cy="12.3" r="1.4" fill="#5865f2"/><circle cx="14.5" cy="12.3" r="1.4" fill="#5865f2"/></svg>
<svg style="position:absolute;left:819px;top:898.5px;" width="14" height="14" viewBox="0 0 14 14"><circle cx="7" cy="7" r="6.8" fill="#e84545"/><circle cx="7" cy="7" r="3" fill="#fff"/></svg>
<div style="position:absolute;left:812px;top:930px;width:10px;height:3px;background:#6d6d6d;border-radius:2px"></div>
<svg style="position:absolute;left:848px;top:903.5px;" width="24" height="24" viewBox="0 0 24 24"><circle cx="12" cy="12" r="11.8" fill="#db4437"/><path d="M12 12 L1.6 18 A11.8 11.8 0 0 1 1.6 6 Z" fill="#0f9d58"/><path d="M12 12 L1.6 18 A11.8 11.8 0 0 0 22.4 18 Z" fill="#0f9d58"/><path d="M12 12 L22.4 6 A11.8 11.8 0 0 1 12 23.8 Z" fill="#f4b400"/><circle cx="12" cy="12" r="5.4" fill="#fff"/><circle cx="12" cy="12" r="4.2" fill="#4285f4"/></svg>
<svg style="position:absolute;left:862px;top:898px;" width="15" height="15" viewBox="0 0 15 15"><circle cx="7.5" cy="7.5" r="7.3" fill="#b89a86"/><circle cx="6" cy="8" r="3" fill="#5a4536"/><circle cx="10" cy="6" r="2" fill="#e8d8c8"/></svg>
<div style="position:absolute;left:855px;top:930px;width:10px;height:3px;background:#6d6d6d;border-radius:2px"></div>
<svg style="position:absolute;left:892px;top:904px;" width="22" height="22" viewBox="0 0 22 22"><circle cx="11" cy="11" r="10.8" fill="#2a9fd8"/><path d="M4.5 10.8 L16.5 6 L14.5 16 L10.5 13 L8.5 15 L8.5 12 L14 7.8 L7.5 11.8 Z" fill="#fff"/></svg>
<div style="position:absolute;left:905px;top:903.5px;width:15px;height:10.0px;background:#9a9a9a;border-radius:4px"></div>
<div class="t" style="left:906.5px;top:903.5px;font-size:8.5px;font-weight:400;color:#fff;line-height:10px;">15</div>
<div style="position:absolute;left:898px;top:930px;width:10px;height:3px;background:#6d6d6d;border-radius:2px"></div>
<svg style="position:absolute;left:935px;top:904px;" width="22" height="22" viewBox="0 0 22 22"><circle cx="11" cy="11" r="10.8" fill="#3d7fd6"/></svg>
<div class="t" style="left:937.5px;top:906.5px;font-size:14px;font-weight:400;color:#e8f0fb;line-height:16px;letter-spacing:-0.5px">qb</div>
<div style="position:absolute;left:941px;top:930px;width:10px;height:3px;background:#6d6d6d;border-radius:2px"></div>
<svg style="position:absolute;left:980px;top:902px;" width="19" height="24" viewBox="0 0 19 24"><rect x="0.5" y="2" width="18" height="21" rx="1.5" fill="#5cc3e8"/><rect x="0.5" y="21.5" width="18" height="2" fill="#c2582e"/><path d="M4 6 H15 M4 10 H15 M4 14 H15 M4 18 H15" stroke="#1d5f86" stroke-width="1.4"/><path d="M3.5 0 V3.5 M7.5 0 V3.5 M11.5 0 V3.5 M15.5 0 V3.5" stroke="#1d5f86" stroke-width="1.3"/></svg>
<div style="position:absolute;left:984px;top:930px;width:10px;height:3px;background:#6d6d6d;border-radius:2px"></div>
<svg style="position:absolute;left:1021px;top:903px;" width="23" height="24" viewBox="0 0 23 24"><path d="M11 1 Q22 1 22 10 Q22 14 18 14 Q15 14 15.5 17 Q16 22 10 22 Q1 22 1 12 Q1 1 11 1 Z" fill="#3aa7e0"/><circle cx="6" cy="9" r="2" fill="#4caf50"/><circle cx="10" cy="5.5" r="2" fill="#ffc107"/><circle cx="5.5" cy="14" r="2" fill="#f44336"/><circle cx="15" cy="6" r="2" fill="#e8e8e8"/><path d="M17 10 L19.5 23" stroke="#b8742a" stroke-width="2"/><path d="M15.5 7 L19.5 7 L18.5 11 L16.5 11 Z" fill="#f2c94c"/></svg>
<div style="position:absolute;left:1027px;top:930px;width:10px;height:3px;background:#6d6d6d;border-radius:2px"></div>
<div style="position:absolute;left:1056px;top:896px;width:38px;height:37px;background:#eef3fa;border-radius:5px"></div>
<svg style="position:absolute;left:1063px;top:902.5px;" width="24" height="24" viewBox="0 0 24 24"><rect width="24" height="24" fill="#000"/><path d="M4.3 4.3 H19.7 V19.5 L15.2 15.2 V8.8 H8.5 Z" fill="#fff"/><path d="M3.2 20.5 V14.2 L8.5 9.8 V15.2 H14.1 L9.3 20.5 Z" fill="#fff"/></svg>
<div style="position:absolute;left:1067px;top:930px;width:16px;height:3px;background:#1c6fd6;border-radius:2px"></div>
<svg style="position:absolute;left:1256px;top:911px;" width="13" height="8" viewBox="0 0 13 8"><path d="M0.8 7.2 L6.5 1.2 L12.2 7.2" fill="none" stroke="#222" stroke-width="1.3"/></svg>
<div class="t" style="left:1284.76px;top:907.0px;font-size:10.5px;font-weight:400;color:#1a1a1a;line-height:16px;">РУС</div>
<svg style="position:absolute;left:1325px;top:908px;" width="16" height="13" viewBox="0 0 16 13"><path d="M1 5 Q8 -1.5 15 5" fill="none" stroke="#222" stroke-width="1.3"/><path d="M3.5 7.5 Q8 3 12.5 7.5" fill="none" stroke="#222" stroke-width="1.3"/><path d="M6 10 Q8 8.3 10 10" fill="none" stroke="#222" stroke-width="1.3"/><circle cx="8" cy="12" r="1.2" fill="#222"/></svg>
<svg style="position:absolute;left:1348px;top:908px;" width="16" height="14" viewBox="0 0 16 14"><path d="M1 4.5 H4 L8 1 V13 L4 9.5 H1 Z" fill="none" stroke="#222" stroke-width="1.2"/><path d="M10.5 4.5 Q12 7 10.5 9.5 M12.5 2.5 Q15.5 7 12.5 11.5" fill="none" stroke="#222" stroke-width="1.2"/></svg>
<svg style="position:absolute;left:1372px;top:910px;" width="16" height="10" viewBox="0 0 16 10"><rect x="0.7" y="0.7" width="13" height="8.6" rx="1.5" fill="none" stroke="#222" stroke-width="1.3"/><rect x="2.5" y="2.5" width="3.5" height="5" fill="#222"/><rect x="14.5" y="3.5" width="1.5" height="3" fill="#222"/></svg>
<div class="t" style="right:42px;top:899px;font-size:11.3px;line-height:16px;color:#1a1a1a;text-align:right">1:41</div>
<div class="t" style="right:42px;top:914px;font-size:11.3px;line-height:16px;color:#1a1a1a;text-align:right">26.12.2023</div>
<svg style="position:absolute;left:1465px;top:907.5px;" width="15.5" height="15.5" viewBox="0 0 15.5 15.5"><circle cx="7.75" cy="7.75" r="7.75" fill="#1475d9"/></svg>
<div class="t" style="left:1469.5px;top:907.3px;font-size:10.5px;font-weight:400;color:#fff;line-height:16px;">3</div>
</body></html>
